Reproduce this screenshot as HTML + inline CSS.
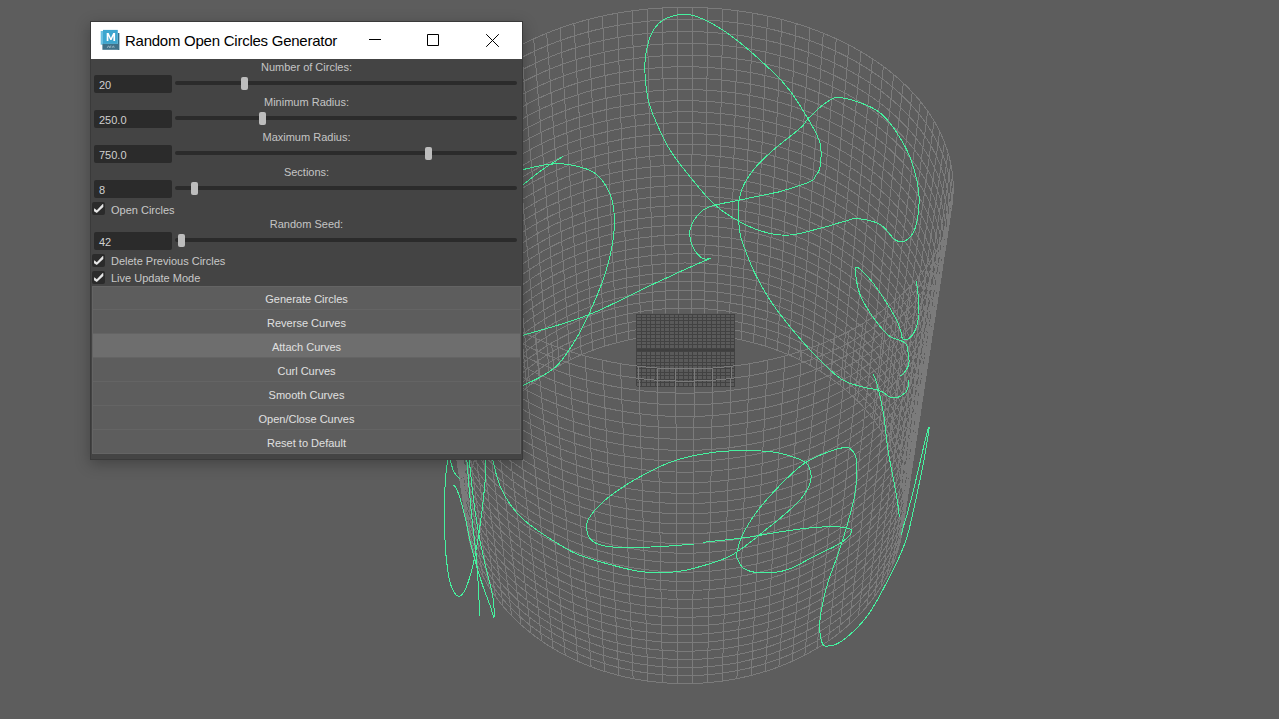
<!DOCTYPE html>
<html><head><meta charset="utf-8">
<style>
html,body{margin:0;padding:0;width:1279px;height:719px;overflow:hidden;background:#5d5d5d;font-family:"Liberation Sans",sans-serif;}
#vp{position:absolute;left:0;top:0;}
#dlg{position:absolute;left:90px;top:21px;width:431px;height:437px;border:1px solid #3a3a3a;background:#444444;box-shadow:0 4px 14px rgba(0,0,0,0.28);}
#title{position:absolute;left:0;top:0;width:431px;height:37px;background:#ffffff;}
#title .t{position:absolute;left:34px;top:10px;font-size:15px;letter-spacing:-0.25px;color:#000;white-space:nowrap;line-height:18px;}
.icon{position:absolute;left:9px;top:7px;width:20px;height:22px;}
.lbl{position:absolute;left:0;width:431px;text-align:center;font-size:11px;color:#c4c4c4;line-height:13px;white-space:nowrap;}
.inp{position:absolute;left:3px;width:78px;height:18px;background:#2b2b2b;border-radius:2px;}
.inp span{position:absolute;left:5px;top:4px;font-size:11px;color:#d0d0d0;line-height:13px;}
.trk{position:absolute;left:84px;width:342px;height:4px;background:#2b2b2b;border-radius:2px;}
.hdl{position:absolute;width:7px;height:13px;background:#bdbdbd;border-radius:2px;}
.cb{position:absolute;left:1px;width:13px;height:13px;background:#2b2b2b;border-radius:2px;}
.cbt{position:absolute;left:20px;font-size:11px;color:#c8c8c8;line-height:13px;white-space:nowrap;}
.btn{position:absolute;left:1px;width:429px;height:23px;background:#5d5d5d;text-align:center;font-size:11px;color:#e0e0e0;line-height:27px;border:1px solid #646464;border-top:none;box-sizing:border-box;height:24px;}
.btn.first{border-top:1px solid #646464;line-height:25px;}
</style></head><body>
<svg id="vp" width="1279" height="719" viewBox="0 0 1279 719">
<path d="M903.4,494.2 L902.7,488.2 L901.6,482.2 L900.3,476.2 L898.8,470.3 L897.0,464.5 L895.0,458.7 L892.7,453.1 L890.2,447.4 L887.5,441.9 L884.6,436.5 L881.4,431.2 L878.0,425.9 L874.4,420.8 L870.6,415.8 L866.6,410.9 L862.4,406.1 L858.0,401.5 L853.4,397.0 L848.7,392.6 L843.8,388.3 L838.7,384.2 L833.5,380.2 L828.1,376.4 L822.6,372.7 L817.0,369.2 L811.2,365.9 L805.3,362.7 L799.2,359.6 L793.1,356.7 L786.9,354.0 L780.5,351.5 L774.1,349.1 L767.5,346.9 L760.9,344.8 L754.3,343.0 L747.5,341.3 L740.7,339.7 L733.9,338.4 L727.0,337.2 L720.0,336.2 L713.1,335.4 L706.1,334.8 L699.1,334.4 L692.0,334.1 L685.0,334.0 L678.0,334.1 L670.9,334.4 L663.9,334.8 L656.9,335.4 L650.0,336.2 L643.0,337.2 L636.1,338.4 L629.3,339.7 L622.5,341.3 L615.7,343.0 L609.1,344.8 L602.5,346.9 L595.9,349.1 L589.5,351.5 L583.1,354.0 L576.9,356.7 L570.8,359.6 L564.7,362.7 L558.8,365.9 L553.0,369.2 L547.4,372.7 L541.9,376.4 L536.5,380.2 L531.3,384.2 L526.2,388.3 L521.3,392.6 L516.6,397.0 L512.0,401.5 L507.6,406.1 L503.4,410.9 L499.4,415.8 L495.6,420.8 L492.0,425.9 L488.6,431.2 L485.4,436.5 L482.5,441.9 L479.8,447.4 L477.3,453.1 L475.0,458.7 L473.0,464.5 L471.2,470.3 L469.7,476.2 L468.4,482.2 L467.3,488.2 L466.6,494.2 M904.7,485.9 L903.9,479.8 L902.9,473.8 L901.6,467.8 L900.0,461.9 L898.2,456.1 L896.2,450.3 L893.9,444.6 L891.4,439.0 L888.6,433.5 L885.7,428.1 L882.5,422.7 L879.1,417.5 L875.4,412.3 L871.6,407.3 L867.6,402.4 L863.4,397.7 L858.9,393.0 L854.4,388.5 L849.6,384.1 L844.7,379.8 L839.6,375.7 L834.3,371.7 L828.9,367.9 L823.4,364.2 L817.7,360.7 L811.9,357.4 L805.9,354.1 L799.8,351.1 L793.7,348.2 L787.4,345.5 L781.0,342.9 L774.5,340.6 L768.0,338.3 L761.3,336.3 L754.6,334.4 L747.9,332.7 L741.0,331.2 L734.1,329.9 L727.2,328.7 L720.2,327.7 L713.2,326.9 L706.2,326.3 L699.1,325.8 L692.1,325.5 L685.0,325.5 L677.9,325.5 L670.9,325.8 L663.8,326.3 L656.8,326.9 L649.8,327.7 L642.8,328.7 L635.9,329.9 L629.0,331.2 L622.1,332.7 L615.4,334.4 L608.7,336.3 L602.0,338.3 L595.5,340.6 L589.0,342.9 L582.6,345.5 L576.3,348.2 L570.2,351.1 L564.1,354.1 L558.1,357.4 L552.3,360.7 L546.6,364.2 L541.1,367.9 L535.7,371.7 L530.4,375.7 L525.3,379.8 L520.4,384.1 L515.6,388.5 L511.1,393.0 L506.6,397.7 L502.4,402.4 L498.4,407.3 L494.6,412.3 L490.9,417.5 L487.5,422.7 L484.3,428.1 L481.4,433.5 L478.6,439.0 L476.1,444.6 L473.8,450.3 L471.8,456.1 L470.0,461.9 L468.4,467.8 L467.1,473.8 L466.1,479.8 L465.3,485.9 M905.9,477.4 L905.1,471.4 L904.1,465.3 L902.8,459.4 L901.2,453.5 L899.4,447.6 L897.4,441.8 L895.1,436.1 L892.5,430.5 L889.8,425.0 L886.8,419.5 L883.6,414.2 L880.1,408.9 L876.5,403.8 L872.6,398.8 L868.6,393.9 L864.3,389.1 L859.9,384.4 L855.3,379.9 L850.5,375.5 L845.5,371.2 L840.4,367.1 L835.1,363.1 L829.7,359.3 L824.1,355.6 L818.4,352.1 L812.5,348.7 L806.6,345.5 L800.5,342.5 L794.3,339.6 L787.9,336.9 L781.5,334.3 L775.0,331.9 L768.4,329.7 L761.8,327.7 L755.0,325.8 L748.2,324.1 L741.3,322.6 L734.4,321.2 L727.4,320.1 L720.4,319.1 L713.4,318.3 L706.3,317.6 L699.2,317.2 L692.1,316.9 L685.0,316.8 L677.9,316.9 L670.8,317.2 L663.7,317.6 L656.6,318.3 L649.6,319.1 L642.6,320.1 L635.6,321.2 L628.7,322.6 L621.8,324.1 L615.0,325.8 L608.2,327.7 L601.6,329.7 L595.0,331.9 L588.5,334.3 L582.1,336.9 L575.7,339.6 L569.5,342.5 L563.4,345.5 L557.5,348.7 L551.6,352.1 L545.9,355.6 L540.3,359.3 L534.9,363.1 L529.6,367.1 L524.5,371.2 L519.5,375.5 L514.7,379.9 L510.1,384.4 L505.7,389.1 L501.4,393.9 L497.4,398.8 L493.5,403.8 L489.9,408.9 L486.4,414.2 L483.2,419.5 L480.2,425.0 L477.5,430.5 L474.9,436.1 L472.6,441.8 L470.6,447.6 L468.8,453.5 L467.2,459.4 L465.9,465.3 L464.9,471.4 L464.1,477.4 M907.2,468.9 L906.4,462.8 L905.4,456.8 L904.0,450.8 L902.5,444.9 L900.6,439.0 L898.6,433.2 L896.3,427.5 L893.7,421.9 L890.9,416.4 L887.9,410.9 L884.7,405.5 L881.2,400.3 L877.5,395.2 L873.7,390.1 L869.6,385.2 L865.3,380.4 L860.9,375.8 L856.2,371.2 L851.4,366.8 L846.4,362.6 L841.3,358.4 L835.9,354.5 L830.5,350.6 L824.9,346.9 L819.1,343.4 L813.2,340.0 L807.2,336.8 L801.1,333.8 L794.8,330.9 L788.5,328.2 L782.0,325.6 L775.5,323.2 L768.9,321.0 L762.2,318.9 L755.4,317.1 L748.5,315.4 L741.6,313.9 L734.7,312.5 L727.7,311.3 L720.6,310.3 L713.5,309.5 L706.4,308.9 L699.3,308.5 L692.1,308.2 L685.0,308.1 L677.9,308.2 L670.7,308.5 L663.6,308.9 L656.5,309.5 L649.4,310.3 L642.3,311.3 L635.3,312.5 L628.4,313.9 L621.5,315.4 L614.6,317.1 L607.8,318.9 L601.1,321.0 L594.5,323.2 L588.0,325.6 L581.5,328.2 L575.2,330.9 L568.9,333.8 L562.8,336.8 L556.8,340.0 L550.9,343.4 L545.1,346.9 L539.5,350.6 L534.1,354.5 L528.7,358.4 L523.6,362.6 L518.6,366.8 L513.8,371.2 L509.1,375.8 L504.7,380.4 L500.4,385.2 L496.3,390.1 L492.5,395.2 L488.8,400.3 L485.3,405.5 L482.1,410.9 L479.1,416.4 L476.3,421.9 L473.7,427.5 L471.4,433.2 L469.4,439.0 L467.5,444.9 L466.0,450.8 L464.6,456.8 L463.6,462.8 L462.8,468.9 M908.5,460.2 L907.7,454.2 L906.6,448.1 L905.3,442.1 L903.7,436.2 L901.9,430.3 L899.8,424.5 L897.5,418.8 L894.9,413.2 L892.1,407.6 L889.1,402.2 L885.8,396.8 L882.3,391.6 L878.6,386.4 L874.7,381.4 L870.6,376.5 L866.3,371.7 L861.8,367.0 L857.2,362.5 L852.3,358.0 L847.3,353.8 L842.1,349.7 L836.8,345.7 L831.3,341.8 L825.6,338.2 L819.8,334.6 L813.9,331.2 L807.9,328.0 L801.7,325.0 L795.4,322.1 L789.1,319.4 L782.6,316.8 L776.0,314.4 L769.3,312.2 L762.6,310.1 L755.8,308.3 L748.9,306.6 L741.9,305.0 L734.9,303.7 L727.9,302.5 L720.8,301.5 L713.7,300.7 L706.5,300.1 L699.4,299.6 L692.2,299.4 L685.0,299.3 L677.8,299.4 L670.6,299.6 L663.5,300.1 L656.3,300.7 L649.2,301.5 L642.1,302.5 L635.1,303.7 L628.1,305.0 L621.1,306.6 L614.2,308.3 L607.4,310.1 L600.7,312.2 L594.0,314.4 L587.4,316.8 L580.9,319.4 L574.6,322.1 L568.3,325.0 L562.1,328.0 L556.1,331.2 L550.2,334.6 L544.4,338.2 L538.7,341.8 L533.2,345.7 L527.9,349.7 L522.7,353.8 L517.7,358.0 L512.8,362.5 L508.2,367.0 L503.7,371.7 L499.4,376.5 L495.3,381.4 L491.4,386.4 L487.7,391.6 L484.2,396.8 L480.9,402.2 L477.9,407.6 L475.1,413.2 L472.5,418.8 L470.2,424.5 L468.1,430.3 L466.3,436.2 L464.7,442.1 L463.4,448.1 L462.3,454.2 L461.5,460.2 M909.8,451.5 L909.0,445.4 L907.9,439.4 L906.6,433.4 L905.0,427.4 L903.1,421.6 L901.0,415.8 L898.7,410.0 L896.1,404.4 L893.3,398.8 L890.2,393.4 L886.9,388.0 L883.4,382.7 L879.7,377.6 L875.8,372.5 L871.7,367.6 L867.3,362.8 L862.8,358.1 L858.1,353.6 L853.2,349.2 L848.2,344.9 L843.0,340.8 L837.6,336.8 L832.1,333.0 L826.4,329.3 L820.6,325.7 L814.6,322.4 L808.5,319.1 L802.3,316.1 L796.0,313.2 L789.6,310.5 L783.1,307.9 L776.5,305.5 L769.8,303.3 L763.0,301.2 L756.1,299.4 L749.2,297.6 L742.2,296.1 L735.2,294.8 L728.1,293.6 L721.0,292.6 L713.8,291.8 L706.6,291.2 L699.4,290.7 L692.2,290.4 L685.0,290.4 L677.8,290.4 L670.6,290.7 L663.4,291.2 L656.2,291.8 L649.0,292.6 L641.9,293.6 L634.8,294.8 L627.8,296.1 L620.8,297.6 L613.9,299.4 L607.0,301.2 L600.2,303.3 L593.5,305.5 L586.9,307.9 L580.4,310.5 L574.0,313.2 L567.7,316.1 L561.5,319.1 L555.4,322.4 L549.4,325.7 L543.6,329.3 L537.9,333.0 L532.4,336.8 L527.0,340.8 L521.8,344.9 L516.8,349.2 L511.9,353.6 L507.2,358.1 L502.7,362.8 L498.3,367.6 L494.2,372.5 L490.3,377.6 L486.6,382.7 L483.1,388.0 L479.8,393.4 L476.7,398.8 L473.9,404.4 L471.3,410.0 L469.0,415.8 L466.9,421.6 L465.0,427.4 L463.4,433.4 L462.1,439.4 L461.0,445.4 L460.2,451.5 M911.1,442.7 L910.3,436.6 L909.2,430.5 L907.9,424.5 L906.3,418.6 L904.4,412.7 L902.3,406.9 L899.9,401.1 L897.3,395.5 L894.5,389.9 L891.4,384.4 L888.1,379.1 L884.6,373.8 L880.8,368.6 L876.9,363.6 L872.7,358.7 L868.4,353.9 L863.8,349.2 L859.1,344.6 L854.2,340.2 L849.1,335.9 L843.9,331.8 L838.4,327.8 L832.9,324.0 L827.2,320.3 L821.3,316.7 L815.3,313.4 L809.2,310.1 L803.0,307.1 L796.6,304.2 L790.2,301.5 L783.6,298.9 L777.0,296.5 L770.2,294.3 L763.4,292.2 L756.5,290.3 L749.6,288.6 L742.5,287.1 L735.5,285.8 L728.3,284.6 L721.2,283.6 L714.0,282.8 L706.8,282.2 L699.5,281.7 L692.3,281.4 L685.0,281.3 L677.7,281.4 L670.5,281.7 L663.2,282.2 L656.0,282.8 L648.8,283.6 L641.7,284.6 L634.5,285.8 L627.5,287.1 L620.4,288.6 L613.5,290.3 L606.6,292.2 L599.8,294.3 L593.0,296.5 L586.4,298.9 L579.8,301.5 L573.4,304.2 L567.0,307.1 L560.8,310.1 L554.7,313.4 L548.7,316.7 L542.8,320.3 L537.1,324.0 L531.6,327.8 L526.1,331.8 L520.9,335.9 L515.8,340.2 L510.9,344.6 L506.2,349.2 L501.6,353.9 L497.3,358.7 L493.1,363.6 L489.2,368.6 L485.4,373.8 L481.9,379.1 L478.6,384.4 L475.5,389.9 L472.7,395.5 L470.1,401.1 L467.7,406.9 L465.6,412.7 L463.7,418.6 L462.1,424.5 L460.8,430.5 L459.7,436.6 L458.9,442.7 M912.4,433.7 L911.6,427.6 L910.5,421.5 L909.2,415.5 L907.5,409.6 L905.7,403.7 L903.5,397.9 L901.1,392.1 L898.5,386.5 L895.7,380.9 L892.6,375.4 L889.2,370.0 L885.7,364.8 L881.9,359.6 L878.0,354.5 L873.8,349.6 L869.4,344.8 L864.8,340.1 L860.1,335.6 L855.1,331.1 L850.0,326.9 L844.7,322.7 L839.3,318.7 L833.7,314.9 L828.0,311.2 L822.1,307.7 L816.1,304.3 L809.9,301.1 L803.6,298.0 L797.3,295.1 L790.8,292.4 L784.2,289.8 L777.5,287.4 L770.7,285.2 L763.9,283.1 L756.9,281.2 L749.9,279.5 L742.9,278.0 L735.7,276.7 L728.6,275.5 L721.4,274.5 L714.1,273.7 L706.9,273.1 L699.6,272.6 L692.3,272.3 L685.0,272.2 L677.7,272.3 L670.4,272.6 L663.1,273.1 L655.9,273.7 L648.6,274.5 L641.4,275.5 L634.3,276.7 L627.1,278.0 L620.1,279.5 L613.1,281.2 L606.1,283.1 L599.3,285.2 L592.5,287.4 L585.8,289.8 L579.2,292.4 L572.7,295.1 L566.4,298.0 L560.1,301.1 L553.9,304.3 L547.9,307.7 L542.0,311.2 L536.3,314.9 L530.7,318.7 L525.3,322.7 L520.0,326.9 L514.9,331.1 L509.9,335.6 L505.2,340.1 L500.6,344.8 L496.2,349.6 L492.0,354.5 L488.1,359.6 L484.3,364.8 L480.8,370.0 L477.4,375.4 L474.3,380.9 L471.5,386.5 L468.9,392.1 L466.5,397.9 L464.3,403.7 L462.5,409.6 L460.8,415.5 L459.5,421.5 L458.4,427.6 L457.6,433.7 M913.8,424.7 L913.0,418.5 L911.9,412.5 L910.5,406.4 L908.8,400.5 L907.0,394.6 L904.8,388.8 L902.4,383.0 L899.8,377.3 L896.9,371.8 L893.8,366.3 L890.4,360.9 L886.8,355.6 L883.1,350.5 L879.1,345.4 L874.8,340.5 L870.4,335.6 L865.8,331.0 L861.1,326.4 L856.1,322.0 L850.9,317.7 L845.6,313.5 L840.2,309.6 L834.5,305.7 L828.8,302.0 L822.8,298.5 L816.8,295.1 L810.6,291.9 L804.3,288.8 L797.9,285.9 L791.3,283.2 L784.7,280.6 L778.0,278.2 L771.2,276.0 L764.3,273.9 L757.3,272.0 L750.3,270.3 L743.2,268.8 L736.0,267.5 L728.8,266.3 L721.6,265.3 L714.3,264.5 L707.0,263.8 L699.7,263.4 L692.3,263.1 L685.0,263.0 L677.7,263.1 L670.3,263.4 L663.0,263.8 L655.7,264.5 L648.4,265.3 L641.2,266.3 L634.0,267.5 L626.8,268.8 L619.7,270.3 L612.7,272.0 L605.7,273.9 L598.8,276.0 L592.0,278.2 L585.3,280.6 L578.7,283.2 L572.1,285.9 L565.7,288.8 L559.4,291.9 L553.2,295.1 L547.2,298.5 L541.2,302.0 L535.5,305.7 L529.8,309.6 L524.4,313.5 L519.1,317.7 L513.9,322.0 L508.9,326.4 L504.2,331.0 L499.6,335.6 L495.2,340.5 L490.9,345.4 L486.9,350.5 L483.2,355.6 L479.6,360.9 L476.2,366.3 L473.1,371.8 L470.2,377.3 L467.6,383.0 L465.2,388.8 L463.0,394.6 L461.2,400.5 L459.5,406.4 L458.1,412.5 L457.0,418.5 L456.2,424.7 M915.2,415.5 L914.3,409.4 L913.2,403.3 L911.8,397.3 L910.2,391.3 L908.3,385.4 L906.1,379.6 L903.7,373.8 L901.0,368.1 L898.1,362.5 L895.0,357.1 L891.6,351.7 L888.0,346.4 L884.2,341.2 L880.2,336.1 L875.9,331.2 L871.5,326.4 L866.9,321.7 L862.1,317.1 L857.1,312.7 L851.9,308.4 L846.5,304.3 L841.0,300.3 L835.4,296.4 L829.6,292.7 L823.6,289.2 L817.5,285.8 L811.3,282.6 L805.0,279.5 L798.5,276.6 L791.9,273.9 L785.3,271.3 L778.5,268.9 L771.7,266.7 L764.7,264.6 L757.7,262.7 L750.6,261.0 L743.5,259.5 L736.3,258.1 L729.1,257.0 L721.8,256.0 L714.5,255.2 L707.1,254.5 L699.8,254.1 L692.4,253.8 L685.0,253.7 L677.6,253.8 L670.2,254.1 L662.9,254.5 L655.5,255.2 L648.2,256.0 L640.9,257.0 L633.7,258.1 L626.5,259.5 L619.4,261.0 L612.3,262.7 L605.3,264.6 L598.3,266.7 L591.5,268.9 L584.7,271.3 L578.1,273.9 L571.5,276.6 L565.0,279.5 L558.7,282.6 L552.5,285.8 L546.4,289.2 L540.4,292.7 L534.6,296.4 L529.0,300.3 L523.5,304.3 L518.1,308.4 L512.9,312.7 L507.9,317.1 L503.1,321.7 L498.5,326.4 L494.1,331.2 L489.8,336.1 L485.8,341.2 L482.0,346.4 L478.4,351.7 L475.0,357.1 L471.9,362.5 L469.0,368.1 L466.3,373.8 L463.9,379.6 L461.7,385.4 L459.8,391.3 L458.2,397.3 L456.8,403.3 L455.7,409.4 L454.8,415.5 M916.5,406.2 L915.7,400.1 L914.6,394.0 L913.2,388.0 L911.5,382.0 L909.6,376.1 L907.4,370.2 L905.0,364.5 L902.3,358.8 L899.4,353.2 L896.2,347.7 L892.8,342.3 L889.2,337.0 L885.3,331.8 L881.3,326.8 L877.0,321.8 L872.6,317.0 L867.9,312.3 L863.1,307.7 L858.0,303.3 L852.8,299.0 L847.5,294.9 L841.9,290.9 L836.2,287.0 L830.4,283.3 L824.4,279.8 L818.3,276.4 L812.0,273.2 L805.6,270.1 L799.1,267.2 L792.5,264.5 L785.8,261.9 L779.0,259.5 L772.1,257.3 L765.2,255.2 L758.1,253.3 L751.0,251.6 L743.8,250.1 L736.6,248.7 L729.3,247.6 L722.0,246.6 L714.6,245.8 L707.2,245.1 L699.8,244.7 L692.4,244.4 L685.0,244.3 L677.6,244.4 L670.2,244.7 L662.8,245.1 L655.4,245.8 L648.0,246.6 L640.7,247.6 L633.4,248.7 L626.2,250.1 L619.0,251.6 L611.9,253.3 L604.8,255.2 L597.9,257.3 L591.0,259.5 L584.2,261.9 L577.5,264.5 L570.9,267.2 L564.4,270.1 L558.0,273.2 L551.7,276.4 L545.6,279.8 L539.6,283.3 L533.8,287.0 L528.1,290.9 L522.5,294.9 L517.2,299.0 L512.0,303.3 L506.9,307.7 L502.1,312.3 L497.4,317.0 L493.0,321.8 L488.7,326.8 L484.7,331.8 L480.8,337.0 L477.2,342.3 L473.8,347.7 L470.6,353.2 L467.7,358.8 L465.0,364.5 L462.6,370.2 L460.4,376.1 L458.5,382.0 L456.8,388.0 L455.4,394.0 L454.3,400.1 L453.5,406.2 M917.9,396.8 L917.1,390.7 L915.9,384.6 L914.5,378.6 L912.9,372.6 L910.9,366.7 L908.7,360.8 L906.3,355.0 L903.6,349.4 L900.6,343.8 L897.4,338.3 L894.0,332.9 L890.4,327.6 L886.5,322.4 L882.4,317.3 L878.1,312.4 L873.7,307.5 L869.0,302.8 L864.1,298.3 L859.0,293.8 L853.8,289.5 L848.4,285.4 L842.8,281.4 L837.1,277.5 L831.2,273.8 L825.2,270.3 L819.0,266.9 L812.7,263.7 L806.3,260.6 L799.8,257.7 L793.1,254.9 L786.4,252.4 L779.6,250.0 L772.6,247.7 L765.6,245.7 L758.5,243.8 L751.4,242.1 L744.1,240.6 L736.9,239.2 L729.6,238.0 L722.2,237.1 L714.8,236.2 L707.4,235.6 L699.9,235.2 L692.5,234.9 L685.0,234.8 L677.5,234.9 L670.1,235.2 L662.6,235.6 L655.2,236.2 L647.8,237.1 L640.4,238.0 L633.1,239.2 L625.9,240.6 L618.6,242.1 L611.5,243.8 L604.4,245.7 L597.4,247.7 L590.4,250.0 L583.6,252.4 L576.9,254.9 L570.2,257.7 L563.7,260.6 L557.3,263.7 L551.0,266.9 L544.8,270.3 L538.8,273.8 L532.9,277.5 L527.2,281.4 L521.6,285.4 L516.2,289.5 L511.0,293.8 L505.9,298.3 L501.0,302.8 L496.3,307.5 L491.9,312.4 L487.6,317.3 L483.5,322.4 L479.6,327.6 L476.0,332.9 L472.6,338.3 L469.4,343.8 L466.4,349.4 L463.7,355.0 L461.3,360.8 L459.1,366.7 L457.1,372.6 L455.5,378.6 L454.1,384.6 L452.9,390.7 L452.1,396.8 M919.4,387.3 L918.5,381.2 L917.3,375.1 L915.9,369.0 L914.2,363.0 L912.3,357.1 L910.1,351.3 L907.6,345.5 L904.9,339.8 L901.9,334.2 L898.7,328.7 L895.2,323.3 L891.6,318.0 L887.7,312.8 L883.6,307.7 L879.3,302.8 L874.8,297.9 L870.0,293.2 L865.1,288.7 L860.0,284.2 L854.8,279.9 L849.3,275.8 L843.7,271.8 L838.0,267.9 L832.0,264.2 L826.0,260.7 L819.8,257.3 L813.5,254.0 L807.0,251.0 L800.4,248.1 L793.8,245.3 L787.0,242.8 L780.1,240.4 L773.1,238.1 L766.1,236.1 L758.9,234.2 L751.7,232.5 L744.5,231.0 L737.2,229.6 L729.8,228.4 L722.4,227.4 L715.0,226.6 L707.5,226.0 L700.0,225.5 L692.5,225.3 L685.0,225.2 L677.5,225.3 L670.0,225.5 L662.5,226.0 L655.0,226.6 L647.6,227.4 L640.2,228.4 L632.8,229.6 L625.5,231.0 L618.3,232.5 L611.1,234.2 L603.9,236.1 L596.9,238.1 L589.9,240.4 L583.0,242.8 L576.2,245.3 L569.6,248.1 L563.0,251.0 L556.5,254.0 L550.2,257.3 L544.0,260.7 L538.0,264.2 L532.0,267.9 L526.3,271.8 L520.7,275.8 L515.2,279.9 L510.0,284.2 L504.9,288.7 L500.0,293.2 L495.2,297.9 L490.7,302.8 L486.4,307.7 L482.3,312.8 L478.4,318.0 L474.8,323.3 L471.3,328.7 L468.1,334.2 L465.1,339.8 L462.4,345.5 L459.9,351.3 L457.7,357.1 L455.8,363.0 L454.1,369.0 L452.7,375.1 L451.5,381.2 L450.6,387.3 M920.8,377.7 L919.9,371.6 L918.8,365.5 L917.3,359.4 L915.6,353.4 L913.6,347.5 L911.4,341.6 L908.9,335.8 L906.2,330.1 L903.2,324.5 L900.0,319.0 L896.5,313.6 L892.8,308.3 L888.9,303.1 L884.8,298.0 L880.4,293.1 L875.9,288.2 L871.1,283.5 L866.2,279.0 L861.0,274.5 L855.7,270.2 L850.3,266.1 L844.6,262.1 L838.8,258.2 L832.9,254.5 L826.8,251.0 L820.6,247.6 L814.2,244.3 L807.7,241.3 L801.1,238.3 L794.4,235.6 L787.5,233.0 L780.6,230.6 L773.6,228.4 L766.5,226.3 L759.4,224.5 L752.1,222.8 L744.8,221.2 L737.5,219.9 L730.1,218.7 L722.6,217.7 L715.1,216.9 L707.6,216.3 L700.1,215.8 L692.5,215.5 L685.0,215.4 L677.5,215.5 L669.9,215.8 L662.4,216.3 L654.9,216.9 L647.4,217.7 L639.9,218.7 L632.5,219.9 L625.2,221.2 L617.9,222.8 L610.6,224.5 L603.5,226.3 L596.4,228.4 L589.4,230.6 L582.5,233.0 L575.6,235.6 L568.9,238.3 L562.3,241.3 L555.8,244.3 L549.4,247.6 L543.2,251.0 L537.1,254.5 L531.2,258.2 L525.4,262.1 L519.7,266.1 L514.3,270.2 L509.0,274.5 L503.8,279.0 L498.9,283.5 L494.1,288.2 L489.6,293.1 L485.2,298.0 L481.1,303.1 L477.2,308.3 L473.5,313.6 L470.0,319.0 L466.8,324.5 L463.8,330.1 L461.1,335.8 L458.6,341.6 L456.4,347.5 L454.4,353.4 L452.7,359.4 L451.2,365.5 L450.1,371.6 L449.2,377.7 M922.3,368.0 L921.4,361.8 L920.2,355.7 L918.7,349.6 L917.0,343.6 L915.0,337.7 L912.8,331.8 L910.3,326.1 L907.5,320.4 L904.5,314.7 L901.2,309.2 L897.8,303.8 L894.0,298.5 L890.1,293.3 L885.9,288.2 L881.6,283.3 L877.0,278.4 L872.2,273.7 L867.2,269.1 L862.1,264.7 L856.7,260.4 L851.2,256.3 L845.6,252.2 L839.7,248.4 L833.7,244.7 L827.6,241.1 L821.3,237.7 L814.9,234.5 L808.4,231.4 L801.8,228.5 L795.0,225.8 L788.1,223.2 L781.2,220.8 L774.1,218.6 L767.0,216.5 L759.8,214.6 L752.5,212.9 L745.2,211.4 L737.8,210.0 L730.3,208.9 L722.8,207.9 L715.3,207.0 L707.7,206.4 L700.2,206.0 L692.6,205.7 L685.0,205.6 L677.4,205.7 L669.8,206.0 L662.3,206.4 L654.7,207.0 L647.2,207.9 L639.7,208.9 L632.2,210.0 L624.8,211.4 L617.5,212.9 L610.2,214.6 L603.0,216.5 L595.9,218.6 L588.8,220.8 L581.9,223.2 L575.0,225.8 L568.2,228.5 L561.6,231.4 L555.1,234.5 L548.7,237.7 L542.4,241.1 L536.3,244.7 L530.3,248.4 L524.4,252.2 L518.8,256.3 L513.3,260.4 L507.9,264.7 L502.8,269.1 L497.8,273.7 L493.0,278.4 L488.4,283.3 L484.1,288.2 L479.9,293.3 L476.0,298.5 L472.2,303.8 L468.8,309.2 L465.5,314.7 L462.5,320.4 L459.7,326.1 L457.2,331.8 L455.0,337.7 L453.0,343.6 L451.3,349.6 L449.8,355.7 L448.6,361.8 L447.7,368.0 M923.7,358.1 L922.8,352.0 L921.6,345.8 L920.2,339.8 L918.4,333.8 L916.4,327.8 L914.2,321.9 L911.6,316.2 L908.8,310.5 L905.8,304.8 L902.5,299.3 L899.0,293.9 L895.3,288.6 L891.3,283.4 L887.1,278.3 L882.7,273.3 L878.1,268.5 L873.3,263.8 L868.3,259.2 L863.1,254.8 L857.7,250.5 L852.2,246.3 L846.5,242.3 L840.6,238.4 L834.6,234.7 L828.4,231.2 L822.1,227.8 L815.7,224.5 L809.1,221.5 L802.4,218.6 L795.6,215.8 L788.7,213.2 L781.7,210.8 L774.6,208.6 L767.5,206.6 L760.2,204.7 L752.9,203.0 L745.5,201.4 L738.1,200.1 L730.6,198.9 L723.0,197.9 L715.5,197.1 L707.9,196.5 L700.3,196.0 L692.6,195.7 L685.0,195.6 L677.4,195.7 L669.7,196.0 L662.1,196.5 L654.5,197.1 L647.0,197.9 L639.4,198.9 L631.9,200.1 L624.5,201.4 L617.1,203.0 L609.8,204.7 L602.5,206.6 L595.4,208.6 L588.3,210.8 L581.3,213.2 L574.4,215.8 L567.6,218.6 L560.9,221.5 L554.3,224.5 L547.9,227.8 L541.6,231.2 L535.4,234.7 L529.4,238.4 L523.5,242.3 L517.8,246.3 L512.3,250.5 L506.9,254.8 L501.7,259.2 L496.7,263.8 L491.9,268.5 L487.3,273.3 L482.9,278.3 L478.7,283.4 L474.7,288.6 L471.0,293.9 L467.5,299.3 L464.2,304.8 L461.2,310.5 L458.4,316.2 L455.8,321.9 L453.6,327.8 L451.6,333.8 L449.8,339.8 L448.4,345.8 L447.2,352.0 L446.3,358.1 M925.2,348.1 L924.3,342.0 L923.1,335.8 L921.6,329.8 L919.9,323.8 L917.9,317.8 L915.6,311.9 L913.0,306.1 L910.2,300.4 L907.2,294.8 L903.9,289.3 L900.3,283.9 L896.5,278.6 L892.6,273.3 L888.3,268.3 L883.9,263.3 L879.3,258.5 L874.4,253.7 L869.4,249.2 L864.2,244.7 L858.8,240.4 L853.2,236.3 L847.4,232.2 L841.5,228.4 L835.5,224.7 L829.3,221.1 L822.9,217.7 L816.4,214.5 L809.8,211.4 L803.1,208.5 L796.3,205.8 L789.3,203.2 L782.3,200.8 L775.1,198.5 L767.9,196.5 L760.6,194.6 L753.3,192.9 L745.8,191.4 L738.4,190.0 L730.8,188.8 L723.3,187.8 L715.6,187.0 L708.0,186.4 L700.4,185.9 L692.7,185.7 L685.0,185.6 L677.3,185.7 L669.6,185.9 L662.0,186.4 L654.4,187.0 L646.7,187.8 L639.2,188.8 L631.6,190.0 L624.2,191.4 L616.7,192.9 L609.4,194.6 L602.1,196.5 L594.9,198.5 L587.7,200.8 L580.7,203.2 L573.7,205.8 L566.9,208.5 L560.2,211.4 L553.6,214.5 L547.1,217.7 L540.7,221.1 L534.5,224.7 L528.5,228.4 L522.6,232.2 L516.8,236.3 L511.2,240.4 L505.8,244.7 L500.6,249.2 L495.6,253.7 L490.7,258.5 L486.1,263.3 L481.7,268.3 L477.4,273.3 L473.5,278.6 L469.7,283.9 L466.1,289.3 L462.8,294.8 L459.8,300.4 L457.0,306.1 L454.4,311.9 L452.1,317.8 L450.1,323.8 L448.4,329.8 L446.9,335.8 L445.7,342.0 L444.8,348.1 M926.7,338.0 L925.8,331.9 L924.6,325.7 L923.1,319.7 L921.3,313.6 L919.3,307.7 L917.0,301.8 L914.4,296.0 L911.6,290.3 L908.5,284.7 L905.2,279.1 L901.6,273.7 L897.8,268.4 L893.8,263.2 L889.6,258.1 L885.1,253.1 L880.4,248.3 L875.6,243.6 L870.5,239.0 L865.2,234.5 L859.8,230.2 L854.2,226.1 L848.4,222.1 L842.5,218.2 L836.4,214.5 L830.1,210.9 L823.7,207.5 L817.2,204.3 L810.6,201.2 L803.8,198.3 L796.9,195.6 L789.9,193.0 L782.8,190.6 L775.7,188.4 L768.4,186.3 L761.1,184.4 L753.7,182.7 L746.2,181.2 L738.7,179.8 L731.1,178.7 L723.5,177.7 L715.8,176.8 L708.1,176.2 L700.4,175.8 L692.7,175.5 L685.0,175.4 L677.3,175.5 L669.6,175.8 L661.9,176.2 L654.2,176.8 L646.5,177.7 L638.9,178.7 L631.3,179.8 L623.8,181.2 L616.3,182.7 L608.9,184.4 L601.6,186.3 L594.3,188.4 L587.2,190.6 L580.1,193.0 L573.1,195.6 L566.2,198.3 L559.4,201.2 L552.8,204.3 L546.3,207.5 L539.9,210.9 L533.6,214.5 L527.5,218.2 L521.6,222.1 L515.8,226.1 L510.2,230.2 L504.8,234.5 L499.5,239.0 L494.4,243.6 L489.6,248.3 L484.9,253.1 L480.4,258.1 L476.2,263.2 L472.2,268.4 L468.4,273.7 L464.8,279.1 L461.5,284.7 L458.4,290.3 L455.6,296.0 L453.0,301.8 L450.7,307.7 L448.7,313.6 L446.9,319.7 L445.4,325.7 L444.2,331.9 L443.3,338.0 M928.2,327.8 L927.3,321.6 L926.1,315.5 L924.6,309.4 L922.8,303.4 L920.7,297.4 L918.4,291.5 L915.8,285.7 L913.0,280.0 L909.9,274.4 L906.5,268.9 L902.9,263.4 L899.1,258.1 L895.1,252.9 L890.8,247.8 L886.3,242.8 L881.6,238.0 L876.7,233.3 L871.6,228.7 L866.3,224.2 L860.8,219.9 L855.2,215.8 L849.4,211.8 L843.4,207.9 L837.2,204.2 L831.0,200.6 L824.5,197.2 L818.0,194.0 L811.3,190.9 L804.5,188.0 L797.6,185.3 L790.5,182.7 L783.4,180.3 L776.2,178.1 L768.9,176.0 L761.5,174.1 L754.1,172.4 L746.5,170.9 L739.0,169.5 L731.4,168.4 L723.7,167.4 L716.0,166.5 L708.3,165.9 L700.5,165.5 L692.8,165.2 L685.0,165.1 L677.2,165.2 L669.5,165.5 L661.7,165.9 L654.0,166.5 L646.3,167.4 L638.6,168.4 L631.0,169.5 L623.5,170.9 L615.9,172.4 L608.5,174.1 L601.1,176.0 L593.8,178.1 L586.6,180.3 L579.5,182.7 L572.4,185.3 L565.5,188.0 L558.7,190.9 L552.0,194.0 L545.5,197.2 L539.0,200.6 L532.8,204.2 L526.6,207.9 L520.6,211.8 L514.8,215.8 L509.2,219.9 L503.7,224.2 L498.4,228.7 L493.3,233.3 L488.4,238.0 L483.7,242.8 L479.2,247.8 L474.9,252.9 L470.9,258.1 L467.1,263.4 L463.5,268.9 L460.1,274.4 L457.0,280.0 L454.2,285.7 L451.6,291.5 L449.3,297.4 L447.2,303.4 L445.4,309.4 L443.9,315.5 L442.7,321.6 L441.8,327.8 M929.8,317.5 L928.8,311.3 L927.6,305.1 L926.1,299.0 L924.3,293.0 L922.2,287.0 L919.9,281.2 L917.3,275.3 L914.4,269.6 L911.3,264.0 L907.9,258.5 L904.3,253.0 L900.4,247.7 L896.4,242.5 L892.0,237.4 L887.5,232.4 L882.8,227.6 L877.9,222.9 L872.7,218.3 L867.4,213.8 L861.9,209.5 L856.2,205.4 L850.3,201.3 L844.3,197.5 L838.2,193.8 L831.8,190.2 L825.4,186.8 L818.8,183.6 L812.0,180.5 L805.2,177.6 L798.2,174.8 L791.2,172.3 L784.0,169.9 L776.7,167.6 L769.4,165.6 L762.0,163.7 L754.5,162.0 L746.9,160.5 L739.3,159.1 L731.6,157.9 L723.9,156.9 L716.2,156.1 L708.4,155.5 L700.6,155.0 L692.8,154.8 L685.0,154.7 L677.2,154.8 L669.4,155.0 L661.6,155.5 L653.8,156.1 L646.1,156.9 L638.4,157.9 L630.7,159.1 L623.1,160.5 L615.5,162.0 L608.0,163.7 L600.6,165.6 L593.3,167.6 L586.0,169.9 L578.8,172.3 L571.8,174.8 L564.8,177.6 L558.0,180.5 L551.2,183.6 L544.6,186.8 L538.2,190.2 L531.8,193.8 L525.7,197.5 L519.7,201.3 L513.8,205.4 L508.1,209.5 L502.6,213.8 L497.3,218.3 L492.1,222.9 L487.2,227.6 L482.5,232.4 L478.0,237.4 L473.6,242.5 L469.6,247.7 L465.7,253.0 L462.1,258.5 L458.7,264.0 L455.6,269.6 L452.7,275.3 L450.1,281.2 L447.8,287.0 L445.7,293.0 L443.9,299.0 L442.4,305.1 L441.2,311.3 L440.2,317.5 M931.4,307.0 L930.4,300.8 L929.2,294.6 L927.6,288.5 L925.8,282.5 L923.7,276.5 L921.3,270.6 L918.7,264.8 L915.8,259.1 L912.7,253.5 L909.3,247.9 L905.6,242.5 L901.8,237.2 L897.6,232.0 L893.3,226.9 L888.8,221.9 L884.0,217.0 L879.0,212.3 L873.9,207.7 L868.5,203.3 L863.0,199.0 L857.2,194.8 L851.3,190.8 L845.3,186.9 L839.1,183.2 L832.7,179.7 L826.2,176.3 L819.6,173.0 L812.8,170.0 L805.9,167.0 L798.9,164.3 L791.8,161.7 L784.6,159.3 L777.3,157.1 L769.9,155.0 L762.4,153.2 L754.9,151.4 L747.3,149.9 L739.6,148.6 L731.9,147.4 L724.2,146.4 L716.4,145.6 L708.5,144.9 L700.7,144.5 L692.9,144.2 L685.0,144.1 L677.1,144.2 L669.3,144.5 L661.5,144.9 L653.6,145.6 L645.8,146.4 L638.1,147.4 L630.4,148.6 L622.7,149.9 L615.1,151.4 L607.6,153.2 L600.1,155.0 L592.7,157.1 L585.4,159.3 L578.2,161.7 L571.1,164.3 L564.1,167.0 L557.2,170.0 L550.4,173.0 L543.8,176.3 L537.3,179.7 L530.9,183.2 L524.7,186.9 L518.7,190.8 L512.8,194.8 L507.0,199.0 L501.5,203.3 L496.1,207.7 L491.0,212.3 L486.0,217.0 L481.2,221.9 L476.7,226.9 L472.4,232.0 L468.2,237.2 L464.4,242.5 L460.7,247.9 L457.3,253.5 L454.2,259.1 L451.3,264.8 L448.7,270.6 L446.3,276.5 L444.2,282.5 L442.4,288.5 L440.8,294.6 L439.6,300.8 L438.6,307.0 M932.9,296.3 L932.0,290.1 L930.7,284.0 L929.2,277.9 L927.3,271.8 L925.2,265.9 L922.8,260.0 L920.2,254.2 L917.3,248.4 L914.1,242.8 L910.7,237.3 L907.0,231.8 L903.1,226.5 L899.0,221.3 L894.6,216.2 L890.0,211.2 L885.2,206.4 L880.2,201.6 L875.0,197.1 L869.6,192.6 L864.0,188.3 L858.3,184.1 L852.3,180.1 L846.2,176.3 L840.0,172.5 L833.6,169.0 L827.0,165.6 L820.4,162.4 L813.6,159.3 L806.6,156.4 L799.6,153.6 L792.4,151.1 L785.2,148.7 L777.8,146.4 L770.4,144.4 L762.9,142.5 L755.3,140.8 L747.6,139.2 L739.9,137.9 L732.2,136.7 L724.4,135.7 L716.5,134.9 L708.7,134.3 L700.8,133.8 L692.9,133.6 L685.0,133.5 L677.1,133.6 L669.2,133.8 L661.3,134.3 L653.5,134.9 L645.6,135.7 L637.8,136.7 L630.1,137.9 L622.4,139.2 L614.7,140.8 L607.1,142.5 L599.6,144.4 L592.2,146.4 L584.8,148.7 L577.6,151.1 L570.4,153.6 L563.4,156.4 L556.4,159.3 L549.6,162.4 L543.0,165.6 L536.4,169.0 L530.0,172.5 L523.8,176.3 L517.7,180.1 L511.7,184.1 L506.0,188.3 L500.4,192.6 L495.0,197.1 L489.8,201.6 L484.8,206.4 L480.0,211.2 L475.4,216.2 L471.0,221.3 L466.9,226.5 L463.0,231.8 L459.3,237.3 L455.9,242.8 L452.7,248.4 L449.8,254.2 L447.2,260.0 L444.8,265.9 L442.7,271.8 L440.8,277.9 L439.3,284.0 L438.0,290.1 L437.1,296.3 M934.5,285.6 L933.6,279.4 L932.3,273.2 L930.7,267.1 L928.9,261.1 L926.8,255.1 L924.3,249.2 L921.7,243.4 L918.7,237.6 L915.5,232.0 L912.1,226.5 L908.4,221.0 L904.5,215.7 L900.3,210.5 L895.9,205.4 L891.3,200.4 L886.4,195.6 L881.4,190.8 L876.2,186.3 L870.7,181.8 L865.1,177.5 L859.3,173.3 L853.4,169.3 L847.2,165.5 L840.9,161.7 L834.5,158.2 L827.9,154.8 L821.2,151.6 L814.3,148.5 L807.3,145.6 L800.3,142.8 L793.1,140.3 L785.8,137.9 L778.4,135.6 L770.9,133.6 L763.3,131.7 L755.7,130.0 L748.0,128.5 L740.3,127.1 L732.5,125.9 L724.6,124.9 L716.7,124.1 L708.8,123.5 L700.9,123.0 L693.0,122.8 L685.0,122.7 L677.0,122.8 L669.1,123.0 L661.2,123.5 L653.3,124.1 L645.4,124.9 L637.5,125.9 L629.7,127.1 L622.0,128.5 L614.3,130.0 L606.7,131.7 L599.1,133.6 L591.6,135.6 L584.2,137.9 L576.9,140.3 L569.7,142.8 L562.7,145.6 L555.7,148.5 L548.8,151.6 L542.1,154.8 L535.5,158.2 L529.1,161.7 L522.8,165.5 L516.6,169.3 L510.7,173.3 L504.9,177.5 L499.3,181.8 L493.8,186.3 L488.6,190.8 L483.6,195.6 L478.7,200.4 L474.1,205.4 L469.7,210.5 L465.5,215.7 L461.6,221.0 L457.9,226.5 L454.5,232.0 L451.3,237.6 L448.3,243.4 L445.7,249.2 L443.2,255.1 L441.1,261.1 L439.3,267.1 L437.7,273.2 L436.4,279.4 L435.5,285.6 M936.2,274.7 L935.2,268.5 L933.9,262.3 L932.3,256.2 L930.5,250.1 L928.3,244.2 L925.9,238.3 L923.2,232.5 L920.2,226.7 L917.0,221.1 L913.5,215.5 L909.8,210.1 L905.8,204.8 L901.6,199.6 L897.2,194.5 L892.6,189.5 L887.7,184.6 L882.6,179.9 L877.4,175.3 L871.9,170.9 L866.2,166.6 L860.4,162.4 L854.4,158.4 L848.2,154.5 L841.9,150.8 L835.4,147.3 L828.8,143.9 L822.0,140.6 L815.1,137.6 L808.1,134.6 L801.0,131.9 L793.7,129.3 L786.4,126.9 L778.9,124.7 L771.4,122.6 L763.8,120.8 L756.1,119.1 L748.4,117.5 L740.6,116.2 L732.7,115.0 L724.8,114.0 L716.9,113.2 L709.0,112.6 L701.0,112.1 L693.0,111.8 L685.0,111.8 L677.0,111.8 L669.0,112.1 L661.0,112.6 L653.1,113.2 L645.2,114.0 L637.3,115.0 L629.4,116.2 L621.6,117.5 L613.9,119.1 L606.2,120.8 L598.6,122.6 L591.1,124.7 L583.6,126.9 L576.3,129.3 L569.0,131.9 L561.9,134.6 L554.9,137.6 L548.0,140.6 L541.2,143.9 L534.6,147.3 L528.1,150.8 L521.8,154.5 L515.6,158.4 L509.6,162.4 L503.8,166.6 L498.1,170.9 L492.6,175.3 L487.4,179.9 L482.3,184.6 L477.4,189.5 L472.8,194.5 L468.4,199.6 L464.2,204.8 L460.2,210.1 L456.5,215.5 L453.0,221.1 L449.8,226.7 L446.8,232.5 L444.1,238.3 L441.7,244.2 L439.5,250.1 L437.7,256.2 L436.1,262.3 L434.8,268.5 L433.8,274.7 M937.8,263.6 L936.8,257.4 L935.5,251.2 L933.9,245.1 L932.0,239.1 L929.9,233.1 L927.4,227.2 L924.7,221.4 L921.7,215.7 L918.5,210.0 L915.0,204.5 L911.2,199.0 L907.2,193.7 L903.0,188.5 L898.5,183.4 L893.9,178.4 L889.0,173.6 L883.9,168.8 L878.5,164.3 L873.0,159.8 L867.4,155.5 L861.5,151.3 L855.4,147.3 L849.2,143.5 L842.8,139.7 L836.3,136.2 L829.6,132.8 L822.8,129.6 L815.9,126.5 L808.8,123.6 L801.7,120.8 L794.4,118.3 L787.0,115.9 L779.5,113.6 L771.9,111.6 L764.3,109.7 L756.6,108.0 L748.8,106.5 L740.9,105.1 L733.0,104.0 L725.1,103.0 L717.1,102.2 L709.1,101.5 L701.1,101.1 L693.0,100.8 L685.0,100.7 L677.0,100.8 L668.9,101.1 L660.9,101.5 L652.9,102.2 L644.9,103.0 L637.0,104.0 L629.1,105.1 L621.2,106.5 L613.4,108.0 L605.7,109.7 L598.1,111.6 L590.5,113.6 L583.0,115.9 L575.6,118.3 L568.3,120.8 L561.2,123.6 L554.1,126.5 L547.2,129.6 L540.4,132.8 L533.7,136.2 L527.2,139.7 L520.8,143.5 L514.6,147.3 L508.5,151.3 L502.6,155.5 L497.0,159.8 L491.5,164.3 L486.1,168.8 L481.0,173.6 L476.1,178.4 L471.5,183.4 L467.0,188.5 L462.8,193.7 L458.8,199.0 L455.0,204.5 L451.5,210.0 L448.3,215.7 L445.3,221.4 L442.6,227.2 L440.1,233.1 L438.0,239.1 L436.1,245.1 L434.5,251.2 L433.2,257.4 L432.2,263.6 M939.5,252.4 L938.5,246.2 L937.2,240.0 L935.6,233.9 L933.6,227.9 L931.5,221.9 L929.0,216.0 L926.3,210.2 L923.2,204.4 L920.0,198.8 L916.4,193.3 L912.7,187.8 L908.6,182.5 L904.4,177.3 L899.9,172.2 L895.2,167.2 L890.2,162.3 L885.1,157.6 L879.8,153.0 L874.2,148.6 L868.5,144.3 L862.6,140.1 L856.5,136.1 L850.2,132.3 L843.8,128.5 L837.2,125.0 L830.5,121.6 L823.7,118.4 L816.7,115.3 L809.6,112.4 L802.4,109.7 L795.0,107.1 L787.6,104.7 L780.1,102.5 L772.5,100.4 L764.8,98.5 L757.0,96.8 L749.2,95.3 L741.3,93.9 L733.3,92.8 L725.3,91.8 L717.3,91.0 L709.3,90.3 L701.2,89.9 L693.1,89.6 L685.0,89.5 L676.9,89.6 L668.8,89.9 L660.7,90.3 L652.7,91.0 L644.7,91.8 L636.7,92.8 L628.7,93.9 L620.8,95.3 L613.0,96.8 L605.2,98.5 L597.5,100.4 L589.9,102.5 L582.4,104.7 L575.0,107.1 L567.6,109.7 L560.4,112.4 L553.3,115.3 L546.3,118.4 L539.5,121.6 L532.8,125.0 L526.2,128.5 L519.8,132.3 L513.5,136.1 L507.4,140.1 L501.5,144.3 L495.8,148.6 L490.2,153.0 L484.9,157.6 L479.8,162.3 L474.8,167.2 L470.1,172.2 L465.6,177.3 L461.4,182.5 L457.3,187.8 L453.6,193.3 L450.0,198.8 L446.8,204.4 L443.7,210.2 L441.0,216.0 L438.5,221.9 L436.4,227.9 L434.4,233.9 L432.8,240.0 L431.5,246.2 L430.5,252.4 M941.2,241.1 L940.2,234.9 L938.8,228.7 L937.2,222.6 L935.3,216.5 L933.1,210.5 L930.6,204.6 L927.8,198.8 L924.8,193.1 L921.5,187.4 L917.9,181.9 L914.1,176.5 L910.1,171.1 L905.8,165.9 L901.3,160.8 L896.5,155.8 L891.5,151.0 L886.4,146.3 L881.0,141.7 L875.4,137.2 L869.6,132.9 L863.7,128.8 L857.6,124.8 L851.3,120.9 L844.8,117.2 L838.2,113.6 L831.4,110.3 L824.5,107.0 L817.5,104.0 L810.4,101.1 L803.1,98.3 L795.7,95.8 L788.2,93.4 L780.6,91.1 L773.0,89.1 L765.2,87.2 L757.4,85.5 L749.5,84.0 L741.6,82.6 L733.6,81.5 L725.6,80.5 L717.5,79.6 L709.4,79.0 L701.3,78.6 L693.1,78.3 L685.0,78.2 L676.9,78.3 L668.7,78.6 L660.6,79.0 L652.5,79.6 L644.4,80.5 L636.4,81.5 L628.4,82.6 L620.5,84.0 L612.6,85.5 L604.8,87.2 L597.0,89.1 L589.4,91.1 L581.8,93.4 L574.3,95.8 L566.9,98.3 L559.6,101.1 L552.5,104.0 L545.5,107.0 L538.6,110.3 L531.8,113.6 L525.2,117.2 L518.7,120.9 L512.4,124.8 L506.3,128.8 L500.4,132.9 L494.6,137.2 L489.0,141.7 L483.6,146.3 L478.5,151.0 L473.5,155.8 L468.7,160.8 L464.2,165.9 L459.9,171.1 L455.9,176.5 L452.1,181.9 L448.5,187.4 L445.2,193.1 L442.2,198.8 L439.4,204.6 L436.9,210.5 L434.7,216.5 L432.8,222.6 L431.2,228.7 L429.8,234.9 L428.8,241.1 M942.9,229.6 L941.9,223.4 L940.5,217.2 L938.9,211.1 L936.9,205.0 L934.7,199.0 L932.2,193.1 L929.4,187.3 L926.4,181.6 L923.0,175.9 L919.4,170.4 L915.6,165.0 L911.5,159.6 L907.2,154.4 L902.6,149.3 L897.9,144.3 L892.9,139.5 L887.6,134.8 L882.2,130.2 L876.6,125.7 L870.8,121.4 L864.8,117.3 L858.6,113.3 L852.3,109.4 L845.8,105.7 L839.1,102.2 L832.3,98.8 L825.4,95.5 L818.3,92.5 L811.1,89.6 L803.8,86.8 L796.4,84.3 L788.9,81.9 L781.2,79.7 L773.5,77.6 L765.7,75.7 L757.9,74.0 L749.9,72.5 L741.9,71.2 L733.9,70.0 L725.8,69.0 L717.7,68.2 L709.6,67.6 L701.4,67.1 L693.2,66.8 L685.0,66.7 L676.8,66.8 L668.6,67.1 L660.4,67.6 L652.3,68.2 L644.2,69.0 L636.1,70.0 L628.1,71.2 L620.1,72.5 L612.1,74.0 L604.3,75.7 L596.5,77.6 L588.8,79.7 L581.1,81.9 L573.6,84.3 L566.2,86.8 L558.9,89.6 L551.7,92.5 L544.6,95.5 L537.7,98.8 L530.9,102.2 L524.2,105.7 L517.7,109.4 L511.4,113.3 L505.2,117.3 L499.2,121.4 L493.4,125.7 L487.8,130.2 L482.4,134.8 L477.1,139.5 L472.1,144.3 L467.4,149.3 L462.8,154.4 L458.5,159.6 L454.4,165.0 L450.6,170.4 L447.0,175.9 L443.6,181.6 L440.6,187.3 L437.8,193.1 L435.3,199.0 L433.1,205.0 L431.1,211.1 L429.5,217.2 L428.1,223.4 L427.1,229.6 M944.6,217.9 L943.6,211.7 L942.2,205.5 L940.6,199.4 L938.6,193.4 L936.4,187.4 L933.8,181.5 L931.0,175.7 L927.9,169.9 L924.6,164.3 L921.0,158.7 L917.1,153.3 L913.0,148.0 L908.6,142.8 L904.0,137.7 L899.2,132.7 L894.2,127.8 L888.9,123.1 L883.5,118.6 L877.8,114.1 L872.0,109.8 L865.9,105.7 L859.7,101.6 L853.3,97.8 L846.8,94.1 L840.1,90.5 L833.3,87.2 L826.3,83.9 L819.2,80.9 L811.9,78.0 L804.5,75.2 L797.1,72.7 L789.5,70.3 L781.8,68.1 L774.1,66.0 L766.2,64.1 L758.3,62.4 L750.3,60.9 L742.3,59.6 L734.2,58.4 L726.1,57.4 L717.9,56.6 L709.7,56.0 L701.5,55.5 L693.2,55.2 L685.0,55.1 L676.8,55.2 L668.5,55.5 L660.3,56.0 L652.1,56.6 L643.9,57.4 L635.8,58.4 L627.7,59.6 L619.7,60.9 L611.7,62.4 L603.8,64.1 L595.9,66.0 L588.2,68.1 L580.5,70.3 L572.9,72.7 L565.5,75.2 L558.1,78.0 L550.8,80.9 L543.7,83.9 L536.7,87.2 L529.9,90.5 L523.2,94.1 L516.7,97.8 L510.3,101.6 L504.1,105.7 L498.0,109.8 L492.2,114.1 L486.5,118.6 L481.1,123.1 L475.8,127.8 L470.8,132.7 L466.0,137.7 L461.4,142.8 L457.0,148.0 L452.9,153.3 L449.0,158.7 L445.4,164.3 L442.1,169.9 L439.0,175.7 L436.2,181.5 L433.6,187.4 L431.4,193.4 L429.4,199.4 L427.8,205.5 L426.4,211.7 L425.4,217.9 M946.4,206.1 L945.3,199.9 L944.0,193.7 L942.3,187.6 L940.3,181.6 L938.0,175.6 L935.5,169.7 L932.6,163.8 L929.5,158.1 L926.2,152.5 L922.5,146.9 L918.6,141.5 L914.5,136.2 L910.1,131.0 L905.5,125.9 L900.6,120.9 L895.5,116.1 L890.2,111.3 L884.7,106.8 L879.1,102.3 L873.2,98.0 L867.1,93.9 L860.8,89.9 L854.4,86.0 L847.8,82.3 L841.1,78.8 L834.2,75.4 L827.2,72.2 L820.0,69.1 L812.7,66.2 L805.3,63.5 L797.8,60.9 L790.2,58.5 L782.4,56.3 L774.6,54.3 L766.7,52.4 L758.8,50.7 L750.7,49.2 L742.7,47.8 L734.5,46.6 L726.3,45.7 L718.1,44.8 L709.9,44.2 L701.6,43.8 L693.3,43.5 L685.0,43.4 L676.7,43.5 L668.4,43.8 L660.1,44.2 L651.9,44.8 L643.7,45.7 L635.5,46.6 L627.3,47.8 L619.3,49.2 L611.2,50.7 L603.3,52.4 L595.4,54.3 L587.6,56.3 L579.8,58.5 L572.2,60.9 L564.7,63.5 L557.3,66.2 L550.0,69.1 L542.8,72.2 L535.8,75.4 L528.9,78.8 L522.2,82.3 L515.6,86.0 L509.2,89.9 L502.9,93.9 L496.8,98.0 L490.9,102.3 L485.3,106.8 L479.8,111.3 L474.5,116.1 L469.4,120.9 L464.5,125.9 L459.9,131.0 L455.5,136.2 L451.4,141.5 L447.5,146.9 L443.8,152.5 L440.5,158.1 L437.4,163.8 L434.5,169.7 L432.0,175.6 L429.7,181.6 L427.7,187.6 L426.0,193.7 L424.7,199.9 L423.6,206.1 M948.2,194.2 L947.1,187.9 L945.7,181.8 L944.0,175.6 L942.0,169.6 L939.7,163.6 L937.2,157.7 L934.3,151.9 L931.2,146.1 L927.8,140.5 L924.1,135.0 L920.2,129.5 L916.0,124.2 L911.6,119.0 L906.9,113.9 L902.0,108.9 L896.9,104.1 L891.6,99.4 L886.0,94.8 L880.3,90.4 L874.4,86.1 L868.3,81.9 L862.0,77.9 L855.5,74.1 L848.9,70.4 L842.1,66.8 L835.1,63.5 L828.1,60.2 L820.8,57.2 L813.5,54.3 L806.1,51.6 L798.5,49.0 L790.8,46.6 L783.0,44.4 L775.2,42.4 L767.2,40.5 L759.2,38.8 L751.1,37.3 L743.0,35.9 L734.8,34.8 L726.6,33.8 L718.3,33.0 L710.0,32.3 L701.7,31.9 L693.3,31.6 L685.0,31.5 L676.7,31.6 L668.3,31.9 L660.0,32.3 L651.7,33.0 L643.4,33.8 L635.2,34.8 L627.0,35.9 L618.9,37.3 L610.8,38.8 L602.8,40.5 L594.8,42.4 L587.0,44.4 L579.2,46.6 L571.5,49.0 L563.9,51.6 L556.5,54.3 L549.2,57.2 L541.9,60.2 L534.9,63.5 L527.9,66.8 L521.1,70.4 L514.5,74.1 L508.0,77.9 L501.7,81.9 L495.6,86.1 L489.7,90.4 L484.0,94.8 L478.4,99.4 L473.1,104.1 L468.0,108.9 L463.1,113.9 L458.4,119.0 L454.0,124.2 L449.8,129.5 L445.9,135.0 L442.2,140.5 L438.8,146.1 L435.7,151.9 L432.8,157.7 L430.3,163.6 L428.0,169.6 L426.0,175.6 L424.3,181.8 L422.9,187.9 L421.8,194.2 M950.0,182.0 L948.9,175.8 L947.5,169.6 L945.8,163.5 L943.8,157.5 L941.5,151.5 L938.9,145.6 L936.0,139.8 L932.8,134.0 L929.4,128.4 L925.7,122.8 L921.7,117.4 L917.5,112.1 L913.1,106.9 L908.4,101.8 L903.4,96.8 L898.3,92.0 L892.9,87.3 L887.3,82.7 L881.6,78.3 L875.6,74.0 L869.4,69.9 L863.1,65.9 L856.6,62.0 L849.9,58.3 L843.1,54.8 L836.1,51.4 L829.0,48.2 L821.7,45.1 L814.3,42.2 L806.8,39.5 L799.2,36.9 L791.5,34.6 L783.7,32.3 L775.7,30.3 L767.8,28.4 L759.7,26.7 L751.6,25.2 L743.4,23.9 L735.1,22.7 L726.8,21.7 L718.5,20.9 L710.2,20.3 L701.8,19.8 L693.4,19.6 L685.0,19.5 L676.6,19.6 L668.2,19.8 L659.8,20.3 L651.5,20.9 L643.2,21.7 L634.9,22.7 L626.6,23.9 L618.4,25.2 L610.3,26.7 L602.2,28.4 L594.3,30.3 L586.3,32.3 L578.5,34.6 L570.8,36.9 L563.2,39.5 L555.7,42.2 L548.3,45.1 L541.0,48.2 L533.9,51.4 L526.9,54.8 L520.1,58.3 L513.4,62.0 L506.9,65.9 L500.6,69.9 L494.4,74.0 L488.4,78.3 L482.7,82.7 L477.1,87.3 L471.7,92.0 L466.6,96.8 L461.6,101.8 L456.9,106.9 L452.5,112.1 L448.3,117.4 L444.3,122.8 L440.6,128.4 L437.2,134.0 L434.0,139.8 L431.1,145.6 L428.5,151.5 L426.2,157.5 L424.2,163.5 L422.5,169.6 L421.1,175.8 L420.0,182.0 M951.8,169.7 L950.7,163.5 L949.3,157.3 L947.6,151.2 L945.5,145.2 L943.2,139.2 L940.6,133.3 L937.7,127.5 L934.5,121.7 L931.0,116.1 L927.3,110.6 L923.3,105.1 L919.1,99.8 L914.6,94.6 L909.8,89.5 L904.9,84.6 L899.7,79.7 L894.3,75.0 L888.7,70.5 L882.8,66.0 L876.8,61.7 L870.6,57.6 L864.2,53.6 L857.7,49.8 L851.0,46.1 L844.1,42.5 L837.1,39.2 L829.9,36.0 L822.6,32.9 L815.1,30.0 L807.6,27.3 L799.9,24.7 L792.2,22.4 L784.3,20.1 L776.3,18.1 L768.3,16.2 L760.2,14.5 L752.0,13.0 L743.7,11.7 L735.4,10.5 L727.1,9.5 L718.7,8.7 L710.3,8.1 L701.9,7.7 L693.5,7.4 L685.0,7.3 L676.5,7.4 L668.1,7.7 L659.7,8.1 L651.3,8.7 L642.9,9.5 L634.6,10.5 L626.3,11.7 L618.0,13.0 L609.8,14.5 L601.7,16.2 L593.7,18.1 L585.7,20.1 L577.8,22.4 L570.1,24.7 L562.4,27.3 L554.9,30.0 L547.4,32.9 L540.1,36.0 L532.9,39.2 L525.9,42.5 L519.0,46.1 L512.3,49.8 L505.8,53.6 L499.4,57.6 L493.2,61.7 L487.2,66.0 L481.3,70.5 L475.7,75.0 L470.3,79.7 L465.1,84.6 L460.2,89.5 L455.4,94.6 L450.9,99.8 L446.7,105.1 L442.7,110.6 L439.0,116.1 L435.5,121.7 L432.3,127.5 L429.4,133.3 L426.8,139.2 L424.5,145.2 L422.4,151.2 L420.7,157.3 L419.3,163.5 L418.2,169.7 M902.7,488.8 L950.8,164.1 M900.8,478.0 L948.1,153.0 M898.0,467.4 L944.4,142.2 M894.4,457.0 L939.7,131.5 M890.0,446.9 L934.1,121.2 M884.9,437.0 L927.7,111.1 M879.0,427.5 L920.4,101.4 M872.5,418.3 L912.2,92.1 M865.3,409.5 L903.3,83.1 M857.6,401.0 L893.7,74.6 M849.2,393.0 L883.4,66.5 M840.3,385.4 L872.5,58.8 M830.8,378.3 L861.0,51.7 M820.9,371.7 L848.9,45.0 M810.6,365.5 L836.3,38.8 M799.8,359.9 L823.3,33.2 M788.7,354.8 L809.9,28.1 M777.3,350.3 L796.1,23.5 M765.6,346.2 L781.9,19.5 M753.6,342.8 L767.5,16.1 M741.4,339.9 L752.8,13.2 M729.1,337.6 L737.9,10.9 M716.6,335.8 L722.9,9.1 M704.0,334.7 L707.8,8.0 M691.3,334.1 L692.6,7.4 M678.7,334.1 L677.4,7.4 M666.0,334.7 L662.2,8.0 M653.4,335.8 L647.1,9.1 M640.9,337.6 L632.1,10.9 M628.6,339.9 L617.2,13.2 M616.4,342.8 L602.5,16.1 M604.4,346.2 L588.1,19.5 M592.7,350.3 L573.9,23.5 M581.3,354.8 L560.1,28.1 M570.2,359.9 L546.7,33.2 M559.4,365.5 L533.7,38.8 M549.1,371.7 L521.1,45.0 M539.2,378.3 L509.0,51.7 M529.7,385.4 L497.5,58.8 M520.8,393.0 L486.6,66.5 M512.4,401.0 L476.3,74.6 M504.7,409.5 L466.7,83.1 M497.5,418.3 L457.8,92.1 M491.0,427.5 L449.6,101.4 M485.1,437.0 L442.3,111.1 M480.0,446.9 L435.9,121.2 M475.6,457.0 L430.3,131.5 M472.0,467.4 L425.6,142.2 M469.2,478.0 L421.9,153.0 M467.3,488.8 L419.2,164.1" fill="none" stroke="#7b7b7b" stroke-width="1" shape-rendering="crispEdges"/>
<rect x="636.5" y="313.5" width="98.0" height="72.0" fill="#5a5a5a"/><path d="M636.5,313.5 V385.5 M641.5,313.5 V385.5 M646.5,313.5 V385.5 M650.5,313.5 V385.5 M655.5,313.5 V385.5 M660.5,313.5 V385.5 M664.5,313.5 V385.5 M669.5,313.5 V385.5 M674.5,313.5 V385.5 M678.5,313.5 V385.5 M683.5,313.5 V385.5 M688.5,313.5 V385.5 M692.5,313.5 V385.5 M697.5,313.5 V385.5 M702.5,313.5 V385.5 M706.5,313.5 V385.5 M711.5,313.5 V385.5 M716.5,313.5 V385.5 M720.5,313.5 V385.5 M725.5,313.5 V385.5 M730.5,313.5 V385.5 M734.5,313.5 V385.5 M636.5,314.5 H734.5 M636.5,317.5 H734.5 M636.5,320.5 H734.5 M636.5,324.5 H734.5 M636.5,327.5 H734.5 M636.5,331.5 H734.5 M636.5,334.5 H734.5 M636.5,338.5 H734.5 M636.5,341.5 H734.5 M636.5,344.5 H734.5 M636.5,348.5 H734.5 M636.5,351.5 H734.5 M636.5,355.5 H734.5 M636.5,358.5 H734.5 M636.5,362.5 H734.5 M636.5,365.5 H734.5 M636.5,368.5 H734.5 M636.5,372.5 H734.5 M636.5,375.5 H734.5 M636.5,379.5 H734.5 M636.5,382.5 H734.5 M636.5,386.5 H734.5" stroke="#424242" stroke-width="1" fill="none" shape-rendering="crispEdges"/><path d="M636.5,349.5 H734.5" stroke="#3e3e3e" stroke-width="2" shape-rendering="crispEdges"/>
<path d="M466.6,494.2 L466.1,500.3 L465.8,506.4 L465.9,512.5 L466.2,518.7 L466.7,524.8 L467.6,530.9 L468.7,537.1 L470.1,543.2 L471.8,549.3 L473.7,555.3 L475.9,561.3 L478.5,567.3 L481.2,573.2 L484.3,579.0 L487.6,584.8 L491.2,590.5 L495.1,596.0 L499.2,601.5 L503.6,606.9 L508.2,612.1 L513.1,617.2 L518.2,622.2 L523.6,627.1 L529.2,631.7 L535.0,636.3 L541.1,640.6 L547.3,644.8 L553.8,648.8 L560.4,652.6 L567.3,656.3 L574.3,659.7 L581.5,662.9 L588.8,665.9 L596.3,668.7 L603.9,671.2 L611.7,673.5 L619.5,675.6 L627.5,677.5 L635.6,679.1 L643.7,680.5 L651.9,681.6 L660.1,682.5 L668.4,683.1 L676.7,683.5 L685.0,683.6 L693.3,683.5 L701.6,683.1 L709.9,682.5 L718.1,681.6 L726.3,680.5 L734.4,679.1 L742.5,677.5 L750.5,675.6 L758.3,673.5 L766.1,671.2 L773.7,668.7 L781.2,665.9 L788.5,662.9 L795.7,659.7 L802.7,656.3 L809.6,652.6 L816.2,648.8 L822.7,644.8 L828.9,640.6 L835.0,636.3 L840.8,631.7 L846.4,627.1 L851.8,622.2 L856.9,617.2 L861.8,612.1 L866.4,606.9 L870.8,601.5 L874.9,596.0 L878.8,590.5 L882.4,584.8 L885.7,579.0 L888.8,573.2 L891.5,567.3 L894.1,561.3 L896.3,555.3 L898.2,549.3 L899.9,543.2 L901.3,537.1 L902.4,530.9 L903.3,524.8 L903.8,518.7 L904.1,512.5 L904.2,506.4 L903.9,500.3 L903.4,494.2 M465.3,485.9 L464.8,492.0 L464.6,498.1 L464.6,504.2 L464.9,510.3 L465.5,516.5 L466.3,522.7 L467.4,528.8 L468.8,534.9 L470.5,541.0 L472.5,547.1 L474.7,553.1 L477.2,559.1 L480.0,565.0 L483.1,570.8 L486.4,576.6 L490.0,582.3 L493.9,587.9 L498.1,593.4 L502.5,598.7 L507.1,604.0 L512.0,609.1 L517.2,614.1 L522.6,619.0 L528.2,623.7 L534.1,628.2 L540.2,632.6 L546.5,636.8 L553.0,640.8 L559.7,644.6 L566.6,648.2 L573.6,651.7 L580.8,654.9 L588.2,657.9 L595.8,660.7 L603.4,663.2 L611.2,665.6 L619.1,667.7 L627.1,669.5 L635.2,671.1 L643.4,672.5 L651.7,673.7 L659.9,674.5 L668.3,675.2 L676.6,675.5 L685.0,675.7 L693.4,675.5 L701.7,675.2 L710.1,674.5 L718.3,673.7 L726.6,672.5 L734.8,671.1 L742.9,669.5 L750.9,667.7 L758.8,665.6 L766.6,663.2 L774.2,660.7 L781.8,657.9 L789.2,654.9 L796.4,651.7 L803.4,648.2 L810.3,644.6 L817.0,640.8 L823.5,636.8 L829.8,632.6 L835.9,628.2 L841.8,623.7 L847.4,619.0 L852.8,614.1 L858.0,609.1 L862.9,604.0 L867.5,598.7 L871.9,593.4 L876.1,587.9 L880.0,582.3 L883.6,576.6 L886.9,570.8 L890.0,565.0 L892.8,559.1 L895.3,553.1 L897.5,547.1 L899.5,541.0 L901.2,534.9 L902.6,528.8 L903.7,522.7 L904.5,516.5 L905.1,510.3 L905.4,504.2 L905.4,498.1 L905.2,492.0 L904.7,485.9 M464.1,477.4 L463.6,483.5 L463.3,489.6 L463.3,495.8 L463.6,501.9 L464.2,508.1 L465.0,514.3 L466.2,520.4 L467.6,526.6 L469.3,532.7 L471.2,538.8 L473.5,544.8 L476.0,550.8 L478.8,556.7 L481.9,562.6 L485.2,568.3 L488.9,574.0 L492.8,579.6 L496.9,585.1 L501.4,590.5 L506.1,595.8 L511.0,600.9 L516.2,605.9 L521.6,610.8 L527.3,615.5 L533.2,620.1 L539.3,624.4 L545.6,628.6 L552.2,632.7 L558.9,636.5 L565.8,640.1 L572.9,643.6 L580.2,646.8 L587.6,649.8 L595.2,652.6 L602.9,655.2 L610.8,657.5 L618.7,659.6 L626.8,661.5 L634.9,663.1 L643.2,664.5 L651.4,665.6 L659.8,666.5 L668.2,667.1 L676.6,667.5 L685.0,667.6 L693.4,667.5 L701.8,667.1 L710.2,666.5 L718.6,665.6 L726.8,664.5 L735.1,663.1 L743.2,661.5 L751.3,659.6 L759.2,657.5 L767.1,655.2 L774.8,652.6 L782.4,649.8 L789.8,646.8 L797.1,643.6 L804.2,640.1 L811.1,636.5 L817.8,632.7 L824.4,628.6 L830.7,624.4 L836.8,620.1 L842.7,615.5 L848.4,610.8 L853.8,605.9 L859.0,600.9 L863.9,595.8 L868.6,590.5 L873.1,585.1 L877.2,579.6 L881.1,574.0 L884.8,568.3 L888.1,562.6 L891.2,556.7 L894.0,550.8 L896.5,544.8 L898.8,538.8 L900.7,532.7 L902.4,526.6 L903.8,520.4 L905.0,514.3 L905.8,508.1 L906.4,501.9 L906.7,495.8 L906.7,489.6 L906.4,483.5 L905.9,477.4 M462.8,468.9 L462.3,475.0 L462.0,481.1 L462.0,487.3 L462.3,493.4 L462.9,499.6 L463.7,505.8 L464.9,512.0 L466.3,518.1 L468.0,524.2 L470.0,530.3 L472.2,536.4 L474.7,542.4 L477.6,548.3 L480.7,554.2 L484.0,560.0 L487.7,565.7 L491.6,571.3 L495.8,576.8 L500.2,582.2 L505.0,587.5 L509.9,592.6 L515.1,597.6 L520.6,602.5 L526.3,607.2 L532.2,611.8 L538.4,616.2 L544.8,620.4 L551.3,624.4 L558.1,628.3 L565.1,631.9 L572.2,635.4 L579.5,638.6 L587.0,641.6 L594.7,644.4 L602.4,647.0 L610.3,649.3 L618.3,651.5 L626.4,653.3 L634.6,655.0 L642.9,656.3 L651.2,657.5 L659.6,658.4 L668.1,659.0 L676.5,659.4 L685.0,659.5 L693.5,659.4 L701.9,659.0 L710.4,658.4 L718.8,657.5 L727.1,656.3 L735.4,655.0 L743.6,653.3 L751.7,651.5 L759.7,649.3 L767.6,647.0 L775.3,644.4 L783.0,641.6 L790.5,638.6 L797.8,635.4 L804.9,631.9 L811.9,628.3 L818.7,624.4 L825.2,620.4 L831.6,616.2 L837.8,611.8 L843.7,607.2 L849.4,602.5 L854.9,597.6 L860.1,592.6 L865.0,587.5 L869.8,582.2 L874.2,576.8 L878.4,571.3 L882.3,565.7 L886.0,560.0 L889.3,554.2 L892.4,548.3 L895.3,542.4 L897.8,536.4 L900.0,530.3 L902.0,524.2 L903.7,518.1 L905.1,512.0 L906.3,505.8 L907.1,499.6 L907.7,493.4 L908.0,487.3 L908.0,481.1 L907.7,475.0 L907.2,468.9 M461.5,460.2 L461.0,466.4 L460.7,472.5 L460.7,478.7 L461.0,484.8 L461.6,491.0 L462.4,497.2 L463.6,503.4 L465.0,509.6 L466.7,515.7 L468.7,521.8 L470.9,527.8 L473.5,533.9 L476.3,539.8 L479.4,545.7 L482.8,551.5 L486.5,557.2 L490.4,562.8 L494.6,568.4 L499.1,573.8 L503.9,579.1 L508.9,584.2 L514.1,589.3 L519.6,594.1 L525.3,598.9 L531.3,603.4 L537.5,607.8 L543.9,612.1 L550.5,616.1 L557.3,620.0 L564.3,623.6 L571.5,627.1 L578.9,630.3 L586.4,633.3 L594.1,636.2 L601.9,638.7 L609.8,641.1 L617.9,643.2 L626.0,645.1 L634.3,646.7 L642.6,648.1 L651.0,649.2 L659.5,650.1 L668.0,650.7 L676.5,651.1 L685.0,651.3 L693.5,651.1 L702.0,650.7 L710.5,650.1 L719.0,649.2 L727.4,648.1 L735.7,646.7 L744.0,645.1 L752.1,643.2 L760.2,641.1 L768.1,638.7 L775.9,636.2 L783.6,633.3 L791.1,630.3 L798.5,627.1 L805.7,623.6 L812.7,620.0 L819.5,616.1 L826.1,612.1 L832.5,607.8 L838.7,603.4 L844.7,598.9 L850.4,594.1 L855.9,589.3 L861.1,584.2 L866.1,579.1 L870.9,573.8 L875.4,568.4 L879.6,562.8 L883.5,557.2 L887.2,551.5 L890.6,545.7 L893.7,539.8 L896.5,533.9 L899.1,527.8 L901.3,521.8 L903.3,515.7 L905.0,509.6 L906.4,503.4 L907.6,497.2 L908.4,491.0 L909.0,484.8 L909.3,478.7 L909.3,472.5 L909.0,466.4 L908.5,460.2 M460.2,451.5 L459.7,457.6 L459.4,463.8 L459.4,470.0 L459.7,476.1 L460.3,482.3 L461.1,488.5 L462.3,494.7 L463.7,500.9 L465.4,507.0 L467.4,513.2 L469.6,519.2 L472.2,525.2 L475.1,531.2 L478.2,537.1 L481.6,542.9 L485.3,548.6 L489.2,554.3 L493.5,559.8 L498.0,565.2 L502.7,570.5 L507.8,575.7 L513.0,580.8 L518.6,585.7 L524.3,590.4 L530.3,595.0 L536.6,599.4 L543.0,603.6 L549.7,607.7 L556.5,611.5 L563.6,615.2 L570.8,618.7 L578.2,621.9 L585.8,625.0 L593.5,627.8 L601.4,630.4 L609.4,632.7 L617.5,634.8 L625.7,636.7 L634.0,638.3 L642.4,639.7 L650.8,640.9 L659.3,641.8 L667.8,642.4 L676.4,642.8 L685.0,642.9 L693.6,642.8 L702.2,642.4 L710.7,641.8 L719.2,640.9 L727.6,639.7 L736.0,638.3 L744.3,636.7 L752.5,634.8 L760.6,632.7 L768.6,630.4 L776.5,627.8 L784.2,625.0 L791.8,621.9 L799.2,618.7 L806.4,615.2 L813.5,611.5 L820.3,607.7 L827.0,603.6 L833.4,599.4 L839.7,595.0 L845.7,590.4 L851.4,585.7 L857.0,580.8 L862.2,575.7 L867.3,570.5 L872.0,565.2 L876.5,559.8 L880.8,554.3 L884.7,548.6 L888.4,542.9 L891.8,537.1 L894.9,531.2 L897.8,525.2 L900.4,519.2 L902.6,513.2 L904.6,507.0 L906.3,500.9 L907.7,494.7 L908.9,488.5 L909.7,482.3 L910.3,476.1 L910.6,470.0 L910.6,463.8 L910.3,457.6 L909.8,451.5 M458.9,442.7 L458.3,448.8 L458.1,455.0 L458.1,461.1 L458.4,467.3 L458.9,473.5 L459.8,479.8 L460.9,486.0 L462.3,492.1 L464.1,498.3 L466.1,504.4 L468.3,510.5 L470.9,516.5 L473.8,522.5 L476.9,528.4 L480.3,534.2 L484.0,540.0 L488.0,545.6 L492.3,551.2 L496.8,556.6 L501.6,561.9 L506.7,567.1 L512.0,572.2 L517.5,577.1 L523.3,581.8 L529.4,586.4 L535.6,590.8 L542.1,595.1 L548.8,599.1 L555.7,603.0 L562.8,606.7 L570.1,610.2 L577.5,613.4 L585.2,616.5 L592.9,619.3 L600.8,621.9 L608.9,624.2 L617.0,626.4 L625.3,628.2 L633.6,629.9 L642.1,631.3 L650.6,632.4 L659.1,633.3 L667.7,634.0 L676.4,634.3 L685.0,634.5 L693.6,634.3 L702.3,634.0 L710.9,633.3 L719.4,632.4 L727.9,631.3 L736.4,629.9 L744.7,628.2 L753.0,626.4 L761.1,624.2 L769.2,621.9 L777.1,619.3 L784.8,616.5 L792.5,613.4 L799.9,610.2 L807.2,606.7 L814.3,603.0 L821.2,599.1 L827.9,595.1 L834.4,590.8 L840.6,586.4 L846.7,581.8 L852.5,577.1 L858.0,572.2 L863.3,567.1 L868.4,561.9 L873.2,556.6 L877.7,551.2 L882.0,545.6 L886.0,540.0 L889.7,534.2 L893.1,528.4 L896.2,522.5 L899.1,516.5 L901.7,510.5 L903.9,504.4 L905.9,498.3 L907.7,492.1 L909.1,486.0 L910.2,479.8 L911.1,473.5 L911.6,467.3 L911.9,461.1 L911.9,455.0 L911.7,448.8 L911.1,442.7 M457.6,433.7 L457.0,439.8 L456.7,446.0 L456.7,452.2 L457.0,458.4 L457.6,464.6 L458.4,470.9 L459.6,477.1 L461.0,483.3 L462.7,489.4 L464.7,495.6 L467.0,501.7 L469.6,507.7 L472.5,513.7 L475.6,519.6 L479.1,525.4 L482.8,531.2 L486.8,536.9 L491.1,542.4 L495.6,547.9 L500.5,553.2 L505.5,558.4 L510.9,563.4 L516.5,568.4 L522.3,573.1 L528.4,577.7 L534.7,582.2 L541.2,586.4 L547.9,590.5 L554.9,594.4 L562.0,598.1 L569.3,601.5 L576.8,604.8 L584.5,607.9 L592.3,610.7 L600.3,613.3 L608.4,615.6 L616.6,617.8 L624.9,619.7 L633.3,621.3 L641.8,622.7 L650.4,623.9 L659.0,624.8 L667.6,625.4 L676.3,625.8 L685.0,625.9 L693.7,625.8 L702.4,625.4 L711.0,624.8 L719.6,623.9 L728.2,622.7 L736.7,621.3 L745.1,619.7 L753.4,617.8 L761.6,615.6 L769.7,613.3 L777.7,610.7 L785.5,607.9 L793.2,604.8 L800.7,601.5 L808.0,598.1 L815.1,594.4 L822.1,590.5 L828.8,586.4 L835.3,582.2 L841.6,577.7 L847.7,573.1 L853.5,568.4 L859.1,563.4 L864.5,558.4 L869.5,553.2 L874.4,547.9 L878.9,542.4 L883.2,536.9 L887.2,531.2 L890.9,525.4 L894.4,519.6 L897.5,513.7 L900.4,507.7 L903.0,501.7 L905.3,495.6 L907.3,489.4 L909.0,483.3 L910.4,477.1 L911.6,470.9 L912.4,464.6 L913.0,458.4 L913.3,452.2 L913.3,446.0 L913.0,439.8 L912.4,433.7 M456.2,424.7 L455.6,430.8 L455.4,437.0 L455.4,443.2 L455.6,449.4 L456.2,455.6 L457.1,461.9 L458.2,468.1 L459.6,474.3 L461.4,480.5 L463.4,486.6 L465.7,492.7 L468.3,498.8 L471.2,504.8 L474.3,510.7 L477.8,516.5 L481.5,522.3 L485.6,528.0 L489.9,533.5 L494.4,539.0 L499.3,544.3 L504.4,549.6 L509.8,554.6 L515.4,559.6 L521.3,564.3 L527.4,568.9 L533.7,573.4 L540.3,577.7 L547.1,581.7 L554.0,585.6 L561.2,589.3 L568.6,592.8 L576.1,596.1 L583.9,599.1 L591.7,602.0 L599.7,604.6 L607.9,607.0 L616.1,609.1 L624.5,611.0 L633.0,612.6 L641.5,614.0 L650.1,615.2 L658.8,616.1 L667.5,616.7 L676.3,617.1 L685.0,617.2 L693.7,617.1 L702.5,616.7 L711.2,616.1 L719.9,615.2 L728.5,614.0 L737.0,612.6 L745.5,611.0 L753.9,609.1 L762.1,607.0 L770.3,604.6 L778.3,602.0 L786.1,599.1 L793.9,596.1 L801.4,592.8 L808.8,589.3 L816.0,585.6 L822.9,581.7 L829.7,577.7 L836.3,573.4 L842.6,568.9 L848.7,564.3 L854.6,559.6 L860.2,554.6 L865.6,549.6 L870.7,544.3 L875.6,539.0 L880.1,533.5 L884.4,528.0 L888.5,522.3 L892.2,516.5 L895.7,510.7 L898.8,504.8 L901.7,498.8 L904.3,492.7 L906.6,486.6 L908.6,480.5 L910.4,474.3 L911.8,468.1 L912.9,461.9 L913.8,455.6 L914.4,449.4 L914.6,443.2 L914.6,437.0 L914.4,430.8 L913.8,424.7 M454.8,415.5 L454.3,421.6 L454.0,427.8 L454.0,434.1 L454.2,440.3 L454.8,446.5 L455.7,452.8 L456.8,459.0 L458.3,465.2 L460.0,471.4 L462.0,477.5 L464.3,483.7 L466.9,489.7 L469.8,495.7 L473.0,501.7 L476.5,507.5 L480.3,513.3 L484.3,519.0 L488.6,524.6 L493.2,530.0 L498.1,535.4 L503.3,540.6 L508.7,545.7 L514.3,550.6 L520.2,555.4 L526.4,560.0 L532.7,564.5 L539.4,568.8 L546.2,572.9 L553.2,576.8 L560.4,580.5 L567.8,584.0 L575.4,587.2 L583.2,590.3 L591.1,593.2 L599.2,595.8 L607.4,598.1 L615.7,600.3 L624.1,602.2 L632.6,603.8 L641.2,605.2 L649.9,606.4 L658.6,607.3 L667.4,607.9 L676.2,608.3 L685.0,608.4 L693.8,608.3 L702.6,607.9 L711.4,607.3 L720.1,606.4 L728.8,605.2 L737.4,603.8 L745.9,602.2 L754.3,600.3 L762.6,598.1 L770.8,595.8 L778.9,593.2 L786.8,590.3 L794.6,587.2 L802.2,584.0 L809.6,580.5 L816.8,576.8 L823.8,572.9 L830.6,568.8 L837.3,564.5 L843.6,560.0 L849.8,555.4 L855.7,550.6 L861.3,545.7 L866.7,540.6 L871.9,535.4 L876.8,530.0 L881.4,524.6 L885.7,519.0 L889.7,513.3 L893.5,507.5 L897.0,501.7 L900.2,495.7 L903.1,489.7 L905.7,483.7 L908.0,477.5 L910.0,471.4 L911.7,465.2 L913.2,459.0 L914.3,452.8 L915.2,446.5 L915.8,440.3 L916.0,434.1 L916.0,427.8 L915.7,421.6 L915.2,415.5 M453.5,406.2 L452.9,412.4 L452.6,418.6 L452.6,424.8 L452.8,431.0 L453.4,437.3 L454.3,443.5 L455.4,449.8 L456.9,456.0 L458.6,462.2 L460.6,468.4 L463.0,474.5 L465.6,480.6 L468.5,486.6 L471.7,492.5 L475.2,498.4 L479.0,504.2 L483.0,509.9 L487.4,515.5 L492.0,521.0 L496.9,526.3 L502.1,531.6 L507.5,536.6 L513.2,541.6 L519.2,546.4 L525.3,551.0 L531.8,555.5 L538.4,559.8 L545.3,563.9 L552.3,567.8 L559.6,571.5 L567.1,575.0 L574.7,578.3 L582.5,581.4 L590.5,584.2 L598.6,586.8 L606.9,589.2 L615.2,591.4 L623.7,593.3 L632.3,594.9 L641.0,596.3 L649.7,597.5 L658.5,598.4 L667.3,599.0 L676.1,599.4 L685.0,599.5 L693.9,599.4 L702.7,599.0 L711.5,598.4 L720.3,597.5 L729.0,596.3 L737.7,594.9 L746.3,593.3 L754.8,591.4 L763.1,589.2 L771.4,586.8 L779.5,584.2 L787.5,581.4 L795.3,578.3 L802.9,575.0 L810.4,571.5 L817.7,567.8 L824.7,563.9 L831.6,559.8 L838.2,555.5 L844.7,551.0 L850.8,546.4 L856.8,541.6 L862.5,536.6 L867.9,531.6 L873.1,526.3 L878.0,521.0 L882.6,515.5 L887.0,509.9 L891.0,504.2 L894.8,498.4 L898.3,492.5 L901.5,486.6 L904.4,480.6 L907.0,474.5 L909.4,468.4 L911.4,462.2 L913.1,456.0 L914.6,449.8 L915.7,443.5 L916.6,437.3 L917.2,431.0 L917.4,424.8 L917.4,418.6 L917.1,412.4 L916.5,406.2 M452.1,396.8 L451.5,403.0 L451.2,409.2 L451.2,415.4 L451.4,421.7 L452.0,428.0 L452.8,434.2 L454.0,440.5 L455.4,446.7 L457.2,452.9 L459.2,459.1 L461.6,465.2 L464.2,471.3 L467.1,477.3 L470.3,483.3 L473.9,489.2 L477.7,495.0 L481.8,500.7 L486.1,506.3 L490.8,511.8 L495.7,517.1 L500.9,522.4 L506.4,527.5 L512.1,532.4 L518.1,537.3 L524.3,541.9 L530.8,546.4 L537.5,550.7 L544.4,554.8 L551.5,558.7 L558.8,562.4 L566.3,565.9 L574.0,569.2 L581.9,572.3 L589.9,575.2 L598.1,577.8 L606.4,580.2 L614.8,582.3 L623.3,584.2 L631.9,585.9 L640.7,587.3 L649.4,588.5 L658.3,589.4 L667.2,590.0 L676.1,590.4 L685.0,590.5 L693.9,590.4 L702.8,590.0 L711.7,589.4 L720.6,588.5 L729.3,587.3 L738.1,585.9 L746.7,584.2 L755.2,582.3 L763.6,580.2 L771.9,577.8 L780.1,575.2 L788.1,572.3 L796.0,569.2 L803.7,565.9 L811.2,562.4 L818.5,558.7 L825.6,554.8 L832.5,550.7 L839.2,546.4 L845.7,541.9 L851.9,537.3 L857.9,532.4 L863.6,527.5 L869.1,522.4 L874.3,517.1 L879.2,511.8 L883.9,506.3 L888.2,500.7 L892.3,495.0 L896.1,489.2 L899.7,483.3 L902.9,477.3 L905.8,471.3 L908.4,465.2 L910.8,459.1 L912.8,452.9 L914.6,446.7 L916.0,440.5 L917.2,434.2 L918.0,428.0 L918.6,421.7 L918.8,415.4 L918.8,409.2 L918.5,403.0 L917.9,396.8 M450.6,387.3 L450.0,393.5 L449.7,399.7 L449.7,406.0 L450.0,412.2 L450.5,418.5 L451.4,424.8 L452.6,431.0 L454.0,437.3 L455.8,443.5 L457.8,449.7 L460.2,455.8 L462.8,461.9 L465.7,467.9 L469.0,473.9 L472.5,479.8 L476.3,485.6 L480.5,491.3 L484.9,497.0 L489.5,502.5 L494.5,507.8 L499.7,513.1 L505.2,518.2 L511.0,523.2 L517.0,528.0 L523.3,532.6 L529.8,537.1 L536.5,541.4 L543.4,545.6 L550.6,549.5 L558.0,553.2 L565.5,556.7 L573.3,560.0 L581.2,563.1 L589.3,566.0 L597.5,568.6 L605.8,571.0 L614.3,573.2 L622.9,575.1 L631.6,576.7 L640.4,578.2 L649.2,579.3 L658.1,580.2 L667.0,580.9 L676.0,581.3 L685.0,581.4 L694.0,581.3 L703.0,580.9 L711.9,580.2 L720.8,579.3 L729.6,578.2 L738.4,576.7 L747.1,575.1 L755.7,573.2 L764.2,571.0 L772.5,568.6 L780.7,566.0 L788.8,563.1 L796.7,560.0 L804.5,556.7 L812.0,553.2 L819.4,549.5 L826.6,545.6 L833.5,541.4 L840.2,537.1 L846.7,532.6 L853.0,528.0 L859.0,523.2 L864.8,518.2 L870.3,513.1 L875.5,507.8 L880.5,502.5 L885.1,497.0 L889.5,491.3 L893.7,485.6 L897.5,479.8 L901.0,473.9 L904.3,467.9 L907.2,461.9 L909.8,455.8 L912.2,449.7 L914.2,443.5 L916.0,437.3 L917.4,431.0 L918.6,424.8 L919.5,418.5 L920.0,412.2 L920.3,406.0 L920.3,399.7 L920.0,393.5 L919.4,387.3 M449.2,377.7 L448.6,383.9 L448.3,390.1 L448.3,396.4 L448.5,402.6 L449.1,408.9 L449.9,415.2 L451.1,421.5 L452.6,427.7 L454.3,433.9 L456.4,440.1 L458.7,446.3 L461.4,452.4 L464.3,458.4 L467.6,464.4 L471.2,470.3 L475.0,476.2 L479.1,481.9 L483.6,487.5 L488.3,493.0 L493.3,498.4 L498.5,503.7 L504.1,508.8 L509.8,513.8 L515.9,518.6 L522.2,523.3 L528.7,527.8 L535.5,532.1 L542.5,536.2 L549.7,540.1 L557.1,543.9 L564.7,547.4 L572.5,550.7 L580.5,553.8 L588.6,556.7 L596.9,559.3 L605.3,561.7 L613.8,563.9 L622.5,565.8 L631.2,567.5 L640.1,568.9 L649.0,570.0 L657.9,571.0 L666.9,571.6 L676.0,572.0 L685.0,572.1 L694.0,572.0 L703.1,571.6 L712.1,571.0 L721.0,570.0 L729.9,568.9 L738.8,567.5 L747.5,565.8 L756.2,563.9 L764.7,561.7 L773.1,559.3 L781.4,556.7 L789.5,553.8 L797.5,550.7 L805.3,547.4 L812.9,543.9 L820.3,540.1 L827.5,536.2 L834.5,532.1 L841.3,527.8 L847.8,523.3 L854.1,518.6 L860.2,513.8 L865.9,508.8 L871.5,503.7 L876.7,498.4 L881.7,493.0 L886.4,487.5 L890.9,481.9 L895.0,476.2 L898.8,470.3 L902.4,464.4 L905.7,458.4 L908.6,452.4 L911.3,446.3 L913.6,440.1 L915.7,433.9 L917.4,427.7 L918.9,421.5 L920.1,415.2 L920.9,408.9 L921.5,402.6 L921.7,396.4 L921.7,390.1 L921.4,383.9 L920.8,377.7 M447.7,368.0 L447.1,374.2 L446.8,380.4 L446.8,386.7 L447.1,392.9 L447.6,399.2 L448.5,405.5 L449.6,411.8 L451.1,418.0 L452.9,424.3 L454.9,430.5 L457.3,436.7 L460.0,442.8 L462.9,448.8 L466.2,454.8 L469.8,460.7 L473.6,466.6 L477.8,472.3 L482.3,477.9 L487.0,483.5 L492.0,488.9 L497.3,494.1 L502.9,499.3 L508.7,504.3 L514.8,509.1 L521.1,513.8 L527.7,518.3 L534.5,522.6 L541.6,526.7 L548.8,530.7 L556.3,534.4 L563.9,538.0 L571.8,541.3 L579.8,544.4 L588.0,547.3 L596.3,549.9 L604.8,552.3 L613.4,554.5 L622.1,556.4 L630.9,558.1 L639.8,559.5 L648.7,560.7 L657.7,561.6 L666.8,562.2 L675.9,562.6 L685.0,562.7 L694.1,562.6 L703.2,562.2 L712.3,561.6 L721.3,560.7 L730.2,559.5 L739.1,558.1 L747.9,556.4 L756.6,554.5 L765.2,552.3 L773.7,549.9 L782.0,547.3 L790.2,544.4 L798.2,541.3 L806.1,538.0 L813.7,534.4 L821.2,530.7 L828.4,526.7 L835.5,522.6 L842.3,518.3 L848.9,513.8 L855.2,509.1 L861.3,504.3 L867.1,499.3 L872.7,494.1 L878.0,488.9 L883.0,483.5 L887.7,477.9 L892.2,472.3 L896.4,466.6 L900.2,460.7 L903.8,454.8 L907.1,448.8 L910.0,442.8 L912.7,436.7 L915.1,430.5 L917.1,424.3 L918.9,418.0 L920.4,411.8 L921.5,405.5 L922.4,399.2 L922.9,392.9 L923.2,386.7 L923.2,380.4 L922.9,374.2 L922.3,368.0 M446.3,358.1 L445.7,364.3 L445.3,370.6 L445.3,376.8 L445.6,383.1 L446.1,389.4 L447.0,395.7 L448.1,402.0 L449.6,408.3 L451.4,414.5 L453.5,420.7 L455.8,426.9 L458.5,433.0 L461.5,439.1 L464.8,445.1 L468.4,451.0 L472.3,456.9 L476.5,462.6 L480.9,468.2 L485.7,473.8 L490.7,479.2 L496.1,484.5 L501.7,489.6 L507.5,494.6 L513.6,499.5 L520.0,504.2 L526.6,508.7 L533.5,513.0 L540.6,517.1 L547.9,521.1 L555.4,524.8 L563.1,528.4 L571.0,531.7 L579.1,534.8 L587.3,537.7 L595.7,540.4 L604.2,542.8 L612.9,544.9 L621.6,546.9 L630.5,548.5 L639.5,550.0 L648.5,551.1 L657.6,552.0 L666.7,552.7 L675.8,553.1 L685.0,553.2 L694.2,553.1 L703.3,552.7 L712.4,552.0 L721.5,551.1 L730.5,550.0 L739.5,548.5 L748.4,546.9 L757.1,544.9 L765.8,542.8 L774.3,540.4 L782.7,537.7 L790.9,534.8 L799.0,531.7 L806.9,528.4 L814.6,524.8 L822.1,521.1 L829.4,517.1 L836.5,513.0 L843.4,508.7 L850.0,504.2 L856.4,499.5 L862.5,494.6 L868.3,489.6 L873.9,484.5 L879.3,479.2 L884.3,473.8 L889.1,468.2 L893.5,462.6 L897.7,456.9 L901.6,451.0 L905.2,445.1 L908.5,439.1 L911.5,433.0 L914.2,426.9 L916.5,420.7 L918.6,414.5 L920.4,408.3 L921.9,402.0 L923.0,395.7 L923.9,389.4 L924.4,383.1 L924.7,376.8 L924.7,370.6 L924.3,364.3 L923.7,358.1 M444.8,348.1 L444.2,354.4 L443.8,360.6 L443.8,366.9 L444.0,373.2 L444.6,379.5 L445.5,385.8 L446.6,392.1 L448.1,398.3 L449.9,404.6 L452.0,410.8 L454.4,417.0 L457.0,423.1 L460.1,429.2 L463.4,435.2 L467.0,441.2 L470.9,447.0 L475.1,452.8 L479.6,458.4 L484.4,464.0 L489.5,469.4 L494.8,474.7 L500.4,479.8 L506.3,484.9 L512.5,489.7 L518.9,494.4 L525.6,498.9 L532.5,503.3 L539.6,507.4 L547.0,511.4 L554.5,515.1 L562.3,518.7 L570.2,522.0 L578.4,525.1 L586.6,528.0 L595.1,530.7 L603.7,533.1 L612.4,535.3 L621.2,537.2 L630.1,538.9 L639.1,540.3 L648.2,541.5 L657.4,542.4 L666.6,543.1 L675.8,543.4 L685.0,543.6 L694.2,543.4 L703.4,543.1 L712.6,542.4 L721.8,541.5 L730.9,540.3 L739.9,538.9 L748.8,537.2 L757.6,535.3 L766.3,533.1 L774.9,530.7 L783.4,528.0 L791.6,525.1 L799.8,522.0 L807.7,518.7 L815.5,515.1 L823.0,511.4 L830.4,507.4 L837.5,503.3 L844.4,498.9 L851.1,494.4 L857.5,489.7 L863.7,484.9 L869.6,479.8 L875.2,474.7 L880.5,469.4 L885.6,464.0 L890.4,458.4 L894.9,452.8 L899.1,447.0 L903.0,441.2 L906.6,435.2 L909.9,429.2 L913.0,423.1 L915.6,417.0 L918.0,410.8 L920.1,404.6 L921.9,398.3 L923.4,392.1 L924.5,385.8 L925.4,379.5 L926.0,373.2 L926.2,366.9 L926.2,360.6 L925.8,354.4 L925.2,348.1 M443.3,338.0 L442.6,344.3 L442.3,350.5 L442.3,356.8 L442.5,363.1 L443.1,369.4 L443.9,375.7 L445.1,382.0 L446.6,388.3 L448.4,394.6 L450.5,400.8 L452.9,407.0 L455.6,413.1 L458.6,419.2 L461.9,425.2 L465.5,431.2 L469.5,437.0 L473.7,442.8 L478.2,448.5 L483.0,454.0 L488.1,459.5 L493.5,464.8 L499.2,469.9 L505.1,474.9 L511.3,479.8 L517.8,484.5 L524.5,489.0 L531.4,493.4 L538.6,497.6 L546.0,501.5 L553.6,505.3 L561.4,508.8 L569.4,512.2 L577.6,515.3 L586.0,518.2 L594.5,520.9 L603.1,523.3 L611.9,525.5 L620.8,527.4 L629.8,529.1 L638.8,530.5 L648.0,531.7 L657.2,532.6 L666.4,533.3 L675.7,533.7 L685.0,533.8 L694.3,533.7 L703.6,533.3 L712.8,532.6 L722.0,531.7 L731.2,530.5 L740.2,529.1 L749.2,527.4 L758.1,525.5 L766.9,523.3 L775.5,520.9 L784.0,518.2 L792.4,515.3 L800.6,512.2 L808.6,508.8 L816.4,505.3 L824.0,501.5 L831.4,497.6 L838.6,493.4 L845.5,489.0 L852.2,484.5 L858.7,479.8 L864.9,474.9 L870.8,469.9 L876.5,464.8 L881.9,459.5 L887.0,454.0 L891.8,448.5 L896.3,442.8 L900.5,437.0 L904.5,431.2 L908.1,425.2 L911.4,419.2 L914.4,413.1 L917.1,407.0 L919.5,400.8 L921.6,394.6 L923.4,388.3 L924.9,382.0 L926.1,375.7 L926.9,369.4 L927.5,363.1 L927.7,356.8 L927.7,350.5 L927.4,344.3 L926.7,338.0 M441.8,327.8 L441.1,334.0 L440.8,340.3 L440.7,346.6 L441.0,352.9 L441.5,359.2 L442.4,365.5 L443.6,371.8 L445.0,378.1 L446.8,384.4 L448.9,390.6 L451.3,396.8 L454.1,403.0 L457.1,409.1 L460.4,415.1 L464.1,421.1 L468.0,426.9 L472.3,432.7 L476.8,438.4 L481.7,444.0 L486.8,449.4 L492.2,454.7 L497.9,459.9 L503.9,464.9 L510.2,469.8 L516.7,474.5 L523.4,479.0 L530.4,483.4 L537.6,487.6 L545.1,491.5 L552.7,495.3 L560.6,498.9 L568.7,502.2 L576.9,505.4 L585.3,508.3 L593.8,510.9 L602.5,513.4 L611.4,515.5 L620.3,517.5 L629.4,519.2 L638.5,520.6 L647.7,521.8 L657.0,522.7 L666.3,523.4 L675.6,523.7 L685.0,523.9 L694.4,523.7 L703.7,523.4 L713.0,522.7 L722.3,521.8 L731.5,520.6 L740.6,519.2 L749.7,517.5 L758.6,515.5 L767.5,513.4 L776.2,510.9 L784.7,508.3 L793.1,505.4 L801.3,502.2 L809.4,498.9 L817.3,495.3 L824.9,491.5 L832.4,487.6 L839.6,483.4 L846.6,479.0 L853.3,474.5 L859.8,469.8 L866.1,464.9 L872.1,459.9 L877.8,454.7 L883.2,449.4 L888.3,444.0 L893.2,438.4 L897.7,432.7 L902.0,426.9 L905.9,421.1 L909.6,415.1 L912.9,409.1 L915.9,403.0 L918.7,396.8 L921.1,390.6 L923.2,384.4 L925.0,378.1 L926.4,371.8 L927.6,365.5 L928.5,359.2 L929.0,352.9 L929.3,346.6 L929.2,340.3 L928.9,334.0 L928.2,327.8 M440.2,317.5 L439.6,323.7 L439.2,330.0 L439.1,336.2 L439.4,342.6 L439.9,348.9 L440.8,355.2 L442.0,361.5 L443.5,367.8 L445.3,374.1 L447.4,380.3 L449.8,386.6 L452.5,392.7 L455.6,398.8 L458.9,404.9 L462.6,410.8 L466.6,416.7 L470.9,422.5 L475.4,428.2 L480.3,433.7 L485.5,439.2 L490.9,444.5 L496.7,449.7 L502.7,454.7 L509.0,459.6 L515.5,464.3 L522.3,468.9 L529.3,473.3 L536.6,477.4 L544.1,481.4 L551.8,485.2 L559.7,488.8 L567.8,492.1 L576.1,495.3 L584.6,498.2 L593.2,500.8 L602.0,503.3 L610.9,505.5 L619.9,507.4 L629.0,509.1 L638.2,510.5 L647.5,511.7 L656.8,512.6 L666.2,513.3 L675.6,513.7 L685.0,513.8 L694.4,513.7 L703.8,513.3 L713.2,512.6 L722.5,511.7 L731.8,510.5 L741.0,509.1 L750.1,507.4 L759.1,505.5 L768.0,503.3 L776.8,500.8 L785.4,498.2 L793.9,495.3 L802.2,492.1 L810.3,488.8 L818.2,485.2 L825.9,481.4 L833.4,477.4 L840.7,473.3 L847.7,468.9 L854.5,464.3 L861.0,459.6 L867.3,454.7 L873.3,449.7 L879.1,444.5 L884.5,439.2 L889.7,433.7 L894.6,428.2 L899.1,422.5 L903.4,416.7 L907.4,410.8 L911.1,404.9 L914.4,398.8 L917.5,392.7 L920.2,386.6 L922.6,380.3 L924.7,374.1 L926.5,367.8 L928.0,361.5 L929.2,355.2 L930.1,348.9 L930.6,342.6 L930.9,336.2 L930.8,330.0 L930.4,323.7 L929.8,317.5 M438.6,307.0 L438.0,313.2 L437.6,319.5 L437.6,325.8 L437.8,332.1 L438.4,338.4 L439.2,344.7 L440.4,351.1 L441.9,357.4 L443.7,363.7 L445.8,369.9 L448.2,376.1 L451.0,382.3 L454.0,388.4 L457.4,394.5 L461.1,400.4 L465.1,406.3 L469.4,412.1 L474.0,417.8 L478.9,423.4 L484.1,428.9 L489.6,434.2 L495.4,439.4 L501.4,444.4 L507.8,449.3 L514.3,454.0 L521.2,458.6 L528.3,463.0 L535.6,467.2 L543.1,471.2 L550.9,474.9 L558.9,478.5 L567.0,481.9 L575.4,485.0 L583.9,487.9 L592.6,490.6 L601.4,493.1 L610.3,495.3 L619.4,497.2 L628.6,498.9 L637.9,500.3 L647.2,501.5 L656.6,502.4 L666.0,503.1 L675.5,503.5 L685.0,503.6 L694.5,503.5 L704.0,503.1 L713.4,502.4 L722.8,501.5 L732.1,500.3 L741.4,498.9 L750.6,497.2 L759.7,495.3 L768.6,493.1 L777.4,490.6 L786.1,487.9 L794.6,485.0 L803.0,481.9 L811.1,478.5 L819.1,474.9 L826.9,471.2 L834.4,467.2 L841.7,463.0 L848.8,458.6 L855.7,454.0 L862.2,449.3 L868.6,444.4 L874.6,439.4 L880.4,434.2 L885.9,428.9 L891.1,423.4 L896.0,417.8 L900.6,412.1 L904.9,406.3 L908.9,400.4 L912.6,394.5 L916.0,388.4 L919.0,382.3 L921.8,376.1 L924.2,369.9 L926.3,363.7 L928.1,357.4 L929.6,351.1 L930.8,344.7 L931.6,338.4 L932.2,332.1 L932.4,325.8 L932.4,319.5 L932.0,313.2 L931.4,307.0 M437.1,296.3 L436.4,302.6 L436.0,308.9 L436.0,315.2 L436.2,321.5 L436.7,327.8 L437.6,334.1 L438.8,340.5 L440.3,346.8 L442.1,353.1 L444.2,359.4 L446.7,365.6 L449.4,371.8 L452.5,377.9 L455.9,383.9 L459.6,389.9 L463.6,395.8 L468.0,401.6 L472.6,407.3 L477.5,412.9 L482.8,418.4 L488.3,423.7 L494.1,428.9 L500.2,434.0 L506.5,438.9 L513.2,443.6 L520.0,448.2 L527.2,452.6 L534.5,456.7 L542.1,460.7 L550.0,464.5 L558.0,468.1 L566.2,471.5 L574.6,474.6 L583.2,477.6 L591.9,480.2 L600.8,482.7 L609.8,484.9 L618.9,486.8 L628.2,488.5 L637.5,490.0 L646.9,491.2 L656.4,492.1 L665.9,492.8 L675.4,493.2 L685.0,493.3 L694.6,493.2 L704.1,492.8 L713.6,492.1 L723.1,491.2 L732.5,490.0 L741.8,488.5 L751.1,486.8 L760.2,484.9 L769.2,482.7 L778.1,480.2 L786.8,477.6 L795.4,474.6 L803.8,471.5 L812.0,468.1 L820.0,464.5 L827.9,460.7 L835.5,456.7 L842.8,452.6 L850.0,448.2 L856.8,443.6 L863.5,438.9 L869.8,434.0 L875.9,428.9 L881.7,423.7 L887.2,418.4 L892.5,412.9 L897.4,407.3 L902.0,401.6 L906.4,395.8 L910.4,389.9 L914.1,383.9 L917.5,377.9 L920.6,371.8 L923.3,365.6 L925.8,359.4 L927.9,353.1 L929.7,346.8 L931.2,340.5 L932.4,334.1 L933.3,327.8 L933.8,321.5 L934.0,315.2 L934.0,308.9 L933.6,302.6 L932.9,296.3 M435.5,285.6 L434.8,291.8 L434.4,298.1 L434.3,304.4 L434.6,310.7 L435.1,317.1 L436.0,323.4 L437.2,329.8 L438.6,336.1 L440.5,342.4 L442.6,348.7 L445.1,354.9 L447.8,361.1 L450.9,367.2 L454.3,373.3 L458.1,379.2 L462.1,385.2 L466.5,391.0 L471.1,396.7 L476.1,402.3 L481.4,407.7 L486.9,413.1 L492.8,418.3 L498.9,423.4 L505.3,428.3 L512.0,433.0 L518.9,437.6 L526.1,442.0 L533.5,446.2 L541.1,450.2 L549.0,454.0 L557.1,457.6 L565.4,461.0 L573.8,464.1 L582.5,467.0 L591.3,469.7 L600.2,472.2 L609.3,474.4 L618.5,476.3 L627.8,478.0 L637.2,479.5 L646.6,480.7 L656.2,481.6 L665.8,482.3 L675.4,482.7 L685.0,482.8 L694.6,482.7 L704.2,482.3 L713.8,481.6 L723.4,480.7 L732.8,479.5 L742.2,478.0 L751.5,476.3 L760.7,474.4 L769.8,472.2 L778.7,469.7 L787.5,467.0 L796.2,464.1 L804.6,461.0 L812.9,457.6 L821.0,454.0 L828.9,450.2 L836.5,446.2 L843.9,442.0 L851.1,437.6 L858.0,433.0 L864.7,428.3 L871.1,423.4 L877.2,418.3 L883.1,413.1 L888.6,407.7 L893.9,402.3 L898.9,396.7 L903.5,391.0 L907.9,385.2 L911.9,379.2 L915.7,373.3 L919.1,367.2 L922.2,361.1 L924.9,354.9 L927.4,348.7 L929.5,342.4 L931.4,336.1 L932.8,329.8 L934.0,323.4 L934.9,317.1 L935.4,310.7 L935.7,304.4 L935.6,298.1 L935.2,291.8 L934.5,285.6 M433.8,274.7 L433.1,280.9 L432.8,287.2 L432.7,293.5 L432.9,299.8 L433.5,306.2 L434.3,312.5 L435.5,318.9 L437.0,325.2 L438.8,331.5 L441.0,337.8 L443.4,344.0 L446.2,350.2 L449.3,356.4 L452.8,362.4 L456.5,368.4 L460.6,374.3 L465.0,380.2 L469.7,385.9 L474.6,391.5 L479.9,397.0 L485.5,402.3 L491.4,407.5 L497.6,412.6 L504.0,417.5 L510.7,422.3 L517.7,426.9 L524.9,431.3 L532.4,435.5 L540.1,439.5 L548.0,443.3 L556.2,446.9 L564.5,450.3 L573.0,453.4 L581.7,456.4 L590.6,459.1 L599.6,461.5 L608.7,463.7 L618.0,465.7 L627.4,467.4 L636.8,468.8 L646.4,470.0 L656.0,471.0 L665.6,471.6 L675.3,472.0 L685.0,472.2 L694.7,472.0 L704.4,471.6 L714.0,471.0 L723.6,470.0 L733.2,468.8 L742.6,467.4 L752.0,465.7 L761.3,463.7 L770.4,461.5 L779.4,459.1 L788.3,456.4 L797.0,453.4 L805.5,450.3 L813.8,446.9 L822.0,443.3 L829.9,439.5 L837.6,435.5 L845.1,431.3 L852.3,426.9 L859.3,422.3 L866.0,417.5 L872.4,412.6 L878.6,407.5 L884.5,402.3 L890.1,397.0 L895.4,391.5 L900.3,385.9 L905.0,380.2 L909.4,374.3 L913.5,368.4 L917.2,362.4 L920.7,356.4 L923.8,350.2 L926.6,344.0 L929.0,337.8 L931.2,331.5 L933.0,325.2 L934.5,318.9 L935.7,312.5 L936.5,306.2 L937.1,299.8 L937.3,293.5 L937.2,287.2 L936.9,280.9 L936.2,274.7 M432.2,263.6 L431.5,269.9 L431.1,276.2 L431.0,282.5 L431.2,288.8 L431.8,295.2 L432.6,301.5 L433.8,307.9 L435.3,314.2 L437.2,320.5 L439.3,326.8 L441.8,333.0 L444.6,339.2 L447.7,345.4 L451.2,351.5 L454.9,357.5 L459.0,363.4 L463.4,369.2 L468.2,374.9 L473.2,380.6 L478.5,386.0 L484.1,391.4 L490.1,396.6 L496.3,401.7 L502.7,406.6 L509.5,411.4 L516.5,416.0 L523.8,420.4 L531.3,424.6 L539.1,428.6 L547.1,432.4 L555.2,436.1 L563.6,439.4 L572.2,442.6 L581.0,445.5 L589.9,448.2 L599.0,450.7 L608.2,452.9 L617.5,454.9 L627.0,456.6 L636.5,458.0 L646.1,459.2 L655.8,460.2 L665.5,460.8 L675.2,461.2 L685.0,461.4 L694.8,461.2 L704.5,460.8 L714.2,460.2 L723.9,459.2 L733.5,458.0 L743.0,456.6 L752.5,454.9 L761.8,452.9 L771.0,450.7 L780.1,448.2 L789.0,445.5 L797.8,442.6 L806.4,439.4 L814.8,436.1 L822.9,432.4 L830.9,428.6 L838.7,424.6 L846.2,420.4 L853.5,416.0 L860.5,411.4 L867.3,406.6 L873.7,401.7 L879.9,396.6 L885.9,391.4 L891.5,386.0 L896.8,380.6 L901.8,374.9 L906.6,369.2 L911.0,363.4 L915.1,357.5 L918.8,351.5 L922.3,345.4 L925.4,339.2 L928.2,333.0 L930.7,326.8 L932.8,320.5 L934.7,314.2 L936.2,307.9 L937.4,301.5 L938.2,295.2 L938.8,288.8 L939.0,282.5 L938.9,276.2 L938.5,269.9 L937.8,263.6 M430.5,252.4 L429.8,258.7 L429.4,265.0 L429.3,271.3 L429.5,277.6 L430.1,284.0 L430.9,290.3 L432.1,296.7 L433.6,303.0 L435.5,309.4 L437.6,315.7 L440.1,321.9 L442.9,328.1 L446.1,334.3 L449.6,340.3 L453.3,346.4 L457.5,352.3 L461.9,358.1 L466.6,363.8 L471.7,369.5 L477.1,375.0 L482.7,380.3 L488.7,385.6 L494.9,390.7 L501.5,395.6 L508.3,400.4 L515.3,405.0 L522.6,409.4 L530.2,413.6 L538.0,417.6 L546.1,421.4 L554.3,425.1 L562.8,428.5 L571.4,431.6 L580.2,434.6 L589.2,437.3 L598.3,439.7 L607.6,441.9 L617.0,443.9 L626.5,445.6 L636.1,447.1 L645.8,448.3 L655.6,449.2 L665.3,449.9 L675.2,450.3 L685.0,450.4 L694.8,450.3 L704.7,449.9 L714.4,449.2 L724.2,448.3 L733.9,447.1 L743.5,445.6 L753.0,443.9 L762.4,441.9 L771.7,439.7 L780.8,437.3 L789.8,434.6 L798.6,431.6 L807.2,428.5 L815.7,425.1 L823.9,421.4 L832.0,417.6 L839.8,413.6 L847.4,409.4 L854.7,405.0 L861.7,400.4 L868.5,395.6 L875.1,390.7 L881.3,385.6 L887.3,380.3 L892.9,375.0 L898.3,369.5 L903.4,363.8 L908.1,358.1 L912.5,352.3 L916.7,346.4 L920.4,340.3 L923.9,334.3 L927.1,328.1 L929.9,321.9 L932.4,315.7 L934.5,309.4 L936.4,303.0 L937.9,296.7 L939.1,290.3 L939.9,284.0 L940.5,277.6 L940.7,271.3 L940.6,265.0 L940.2,258.7 L939.5,252.4 M428.8,241.1 L428.1,247.3 L427.7,253.6 L427.6,260.0 L427.8,266.3 L428.3,272.7 L429.2,279.0 L430.4,285.4 L431.9,291.7 L433.8,298.1 L435.9,304.4 L438.4,310.6 L441.3,316.8 L444.4,323.0 L447.9,329.1 L451.7,335.1 L455.9,341.0 L460.3,346.9 L465.1,352.6 L470.2,358.2 L475.6,363.7 L481.3,369.1 L487.3,374.4 L493.6,379.4 L500.1,384.4 L507.0,389.2 L514.1,393.8 L521.5,398.2 L529.1,402.4 L537.0,406.4 L545.0,410.3 L553.4,413.9 L561.9,417.3 L570.6,420.5 L579.5,423.4 L588.5,426.1 L597.7,428.6 L607.1,430.8 L616.5,432.8 L626.1,434.5 L635.8,436.0 L645.5,437.2 L655.3,438.1 L665.2,438.8 L675.1,439.2 L685.0,439.3 L694.9,439.2 L704.8,438.8 L714.7,438.1 L724.5,437.2 L734.2,436.0 L743.9,434.5 L753.5,432.8 L762.9,430.8 L772.3,428.6 L781.5,426.1 L790.5,423.4 L799.4,420.5 L808.1,417.3 L816.6,413.9 L825.0,410.3 L833.0,406.4 L840.9,402.4 L848.5,398.2 L855.9,393.8 L863.0,389.2 L869.9,384.4 L876.4,379.4 L882.7,374.4 L888.7,369.1 L894.4,363.7 L899.8,358.2 L904.9,352.6 L909.7,346.9 L914.1,341.0 L918.3,335.1 L922.1,329.1 L925.6,323.0 L928.7,316.8 L931.6,310.6 L934.1,304.4 L936.2,298.1 L938.1,291.7 L939.6,285.4 L940.8,279.0 L941.7,272.7 L942.2,266.3 L942.4,260.0 L942.3,253.6 L941.9,247.3 L941.2,241.1 M427.1,229.6 L426.4,235.8 L426.0,242.1 L425.8,248.5 L426.1,254.8 L426.6,261.2 L427.5,267.5 L428.7,273.9 L430.2,280.3 L432.0,286.6 L434.2,292.9 L436.7,299.2 L439.6,305.4 L442.7,311.5 L446.2,317.6 L450.1,323.7 L454.2,329.6 L458.7,335.4 L463.5,341.2 L468.6,346.8 L474.1,352.3 L479.8,357.7 L485.9,363.0 L492.2,368.1 L498.8,373.0 L505.7,377.8 L512.9,382.4 L520.3,386.8 L528.0,391.1 L535.9,395.1 L544.0,398.9 L552.4,402.6 L561.0,406.0 L569.7,409.2 L578.7,412.1 L587.8,414.8 L597.1,417.3 L606.5,419.5 L616.0,421.5 L625.7,423.2 L635.4,424.7 L645.2,425.9 L655.1,426.8 L665.0,427.5 L675.0,427.9 L685.0,428.0 L695.0,427.9 L705.0,427.5 L714.9,426.8 L724.8,425.9 L734.6,424.7 L744.3,423.2 L754.0,421.5 L763.5,419.5 L772.9,417.3 L782.2,414.8 L791.3,412.1 L800.3,409.2 L809.0,406.0 L817.6,402.6 L826.0,398.9 L834.1,395.1 L842.0,391.1 L849.7,386.8 L857.1,382.4 L864.3,377.8 L871.2,373.0 L877.8,368.1 L884.1,363.0 L890.2,357.7 L895.9,352.3 L901.4,346.8 L906.5,341.2 L911.3,335.4 L915.8,329.6 L919.9,323.7 L923.8,317.6 L927.3,311.5 L930.4,305.4 L933.3,299.2 L935.8,292.9 L938.0,286.6 L939.8,280.3 L941.3,273.9 L942.5,267.5 L943.4,261.2 L943.9,254.8 L944.2,248.5 L944.0,242.1 L943.6,235.8 L942.9,229.6 M425.4,217.9 L424.6,224.2 L424.2,230.5 L424.1,236.8 L424.3,243.2 L424.8,249.5 L425.7,255.9 L426.9,262.3 L428.4,268.6 L430.3,275.0 L432.5,281.3 L435.0,287.5 L437.8,293.8 L441.0,299.9 L444.6,306.0 L448.4,312.1 L452.6,318.0 L457.1,323.9 L461.9,329.6 L467.1,335.3 L472.6,340.8 L478.3,346.2 L484.4,351.4 L490.8,356.5 L497.4,361.5 L504.4,366.3 L511.6,370.9 L519.1,375.3 L526.8,379.6 L534.8,383.6 L543.0,387.4 L551.4,391.1 L560.0,394.5 L568.9,397.7 L577.9,400.6 L587.1,403.4 L596.4,405.8 L605.9,408.1 L615.5,410.0 L625.2,411.8 L635.0,413.2 L644.9,414.4 L654.9,415.4 L664.9,416.0 L674.9,416.4 L685.0,416.6 L695.1,416.4 L705.1,416.0 L715.1,415.4 L725.1,414.4 L735.0,413.2 L744.8,411.8 L754.5,410.0 L764.1,408.1 L773.6,405.8 L782.9,403.4 L792.1,400.6 L801.1,397.7 L810.0,394.5 L818.6,391.1 L827.0,387.4 L835.2,383.6 L843.2,379.6 L850.9,375.3 L858.4,370.9 L865.6,366.3 L872.6,361.5 L879.2,356.5 L885.6,351.4 L891.7,346.2 L897.4,340.8 L902.9,335.3 L908.1,329.6 L912.9,323.9 L917.4,318.0 L921.6,312.1 L925.4,306.0 L929.0,299.9 L932.2,293.8 L935.0,287.5 L937.5,281.3 L939.7,275.0 L941.6,268.6 L943.1,262.3 L944.3,255.9 L945.2,249.5 L945.7,243.2 L945.9,236.8 L945.8,230.5 L945.4,224.2 L944.6,217.9 M423.6,206.1 L422.8,212.4 L422.4,218.7 L422.3,225.0 L422.5,231.4 L423.0,237.7 L423.9,244.1 L425.1,250.5 L426.6,256.8 L428.5,263.2 L430.7,269.5 L433.2,275.8 L436.1,282.0 L439.3,288.2 L442.8,294.3 L446.7,300.3 L450.9,306.3 L455.5,312.1 L460.3,317.9 L465.5,323.5 L471.0,329.0 L476.8,334.4 L482.9,339.7 L489.4,344.8 L496.1,349.8 L503.1,354.6 L510.3,359.2 L517.9,363.6 L525.6,367.9 L533.7,371.9 L541.9,375.8 L550.4,379.4 L559.1,382.8 L568.0,386.0 L577.1,389.0 L586.3,391.7 L595.7,394.2 L605.3,396.4 L615.0,398.4 L624.8,400.1 L634.7,401.6 L644.6,402.8 L654.7,403.7 L664.7,404.4 L674.9,404.8 L685.0,404.9 L695.1,404.8 L705.3,404.4 L715.3,403.7 L725.4,402.8 L735.3,401.6 L745.2,400.1 L755.0,398.4 L764.7,396.4 L774.3,394.2 L783.7,391.7 L792.9,389.0 L802.0,386.0 L810.9,382.8 L819.6,379.4 L828.1,375.8 L836.3,371.9 L844.4,367.9 L852.1,363.6 L859.7,359.2 L866.9,354.6 L873.9,349.8 L880.6,344.8 L887.1,339.7 L893.2,334.4 L899.0,329.0 L904.5,323.5 L909.7,317.9 L914.5,312.1 L919.1,306.3 L923.3,300.3 L927.2,294.3 L930.7,288.2 L933.9,282.0 L936.8,275.8 L939.3,269.5 L941.5,263.2 L943.4,256.8 L944.9,250.5 L946.1,244.1 L947.0,237.7 L947.5,231.4 L947.7,225.0 L947.6,218.7 L947.2,212.4 L946.4,206.1 M421.8,194.2 L421.1,200.4 L420.6,206.7 L420.5,213.1 L420.7,219.4 L421.2,225.8 L422.1,232.2 L423.3,238.5 L424.8,244.9 L426.7,251.2 L428.9,257.5 L431.4,263.8 L434.3,270.1 L437.5,276.2 L441.1,282.3 L445.0,288.4 L449.2,294.3 L453.8,300.2 L458.7,306.0 L463.9,311.6 L469.5,317.1 L475.3,322.6 L481.5,327.8 L487.9,332.9 L494.7,337.9 L501.7,342.7 L509.0,347.3 L516.6,351.8 L524.4,356.0 L532.5,360.1 L540.9,363.9 L549.4,367.6 L558.2,371.0 L567.1,374.2 L576.3,377.2 L585.6,379.9 L595.1,382.4 L604.7,384.6 L614.4,386.6 L624.3,388.3 L634.3,389.8 L644.3,391.0 L654.4,391.9 L664.6,392.6 L674.8,393.0 L685.0,393.1 L695.2,393.0 L705.4,392.6 L715.6,391.9 L725.7,391.0 L735.7,389.8 L745.7,388.3 L755.6,386.6 L765.3,384.6 L774.9,382.4 L784.4,379.9 L793.7,377.2 L802.9,374.2 L811.8,371.0 L820.6,367.6 L829.1,363.9 L837.5,360.1 L845.6,356.0 L853.4,351.8 L861.0,347.3 L868.3,342.7 L875.3,337.9 L882.1,332.9 L888.5,327.8 L894.7,322.6 L900.5,317.1 L906.1,311.6 L911.3,306.0 L916.2,300.2 L920.8,294.3 L925.0,288.4 L928.9,282.3 L932.5,276.2 L935.7,270.1 L938.6,263.8 L941.1,257.5 L943.3,251.2 L945.2,244.9 L946.7,238.5 L947.9,232.2 L948.8,225.8 L949.3,219.4 L949.5,213.1 L949.4,206.7 L948.9,200.4 L948.2,194.2 M420.0,182.0 L419.2,188.3 L418.8,194.6 L418.6,200.9 L418.8,207.3 L419.4,213.7 L420.2,220.0 L421.4,226.4 L423.0,232.8 L424.8,239.1 L427.1,245.4 L429.6,251.7 L432.5,257.9 L435.8,264.1 L439.3,270.2 L443.3,276.3 L447.5,282.2 L452.1,288.1 L457.1,293.9 L462.3,299.5 L467.9,305.1 L473.8,310.5 L480.0,315.8 L486.5,320.9 L493.3,325.8 L500.3,330.7 L507.7,335.3 L515.3,339.7 L523.2,344.0 L531.4,348.1 L539.8,351.9 L548.4,355.6 L557.2,359.0 L566.2,362.2 L575.4,365.2 L584.8,367.9 L594.4,370.4 L604.1,372.6 L613.9,374.6 L623.8,376.3 L633.9,377.8 L644.0,379.0 L654.2,380.0 L664.4,380.6 L674.7,381.0 L685.0,381.2 L695.3,381.0 L705.6,380.6 L715.8,380.0 L726.0,379.0 L736.1,377.8 L746.2,376.3 L756.1,374.6 L765.9,372.6 L775.6,370.4 L785.2,367.9 L794.6,365.2 L803.8,362.2 L812.8,359.0 L821.6,355.6 L830.2,351.9 L838.6,348.1 L846.8,344.0 L854.7,339.7 L862.3,335.3 L869.7,330.7 L876.7,325.8 L883.5,320.9 L890.0,315.8 L896.2,310.5 L902.1,305.1 L907.7,299.5 L912.9,293.9 L917.9,288.1 L922.5,282.2 L926.7,276.3 L930.7,270.2 L934.2,264.1 L937.5,257.9 L940.4,251.7 L942.9,245.4 L945.2,239.1 L947.0,232.8 L948.6,226.4 L949.8,220.0 L950.6,213.7 L951.2,207.3 L951.4,200.9 L951.2,194.6 L950.8,188.3 L950.0,182.0 M418.2,169.7 L417.4,176.0 L416.9,182.3 L416.8,188.6 L417.0,195.0 L417.5,201.4 L418.4,207.7 L419.6,214.1 L421.1,220.5 L423.0,226.8 L425.2,233.1 L427.8,239.4 L430.7,245.7 L434.0,251.8 L437.6,258.0 L441.5,264.0 L445.8,270.0 L450.4,275.8 L455.4,281.6 L460.7,287.3 L466.3,292.8 L472.2,298.2 L478.4,303.5 L485.0,308.6 L491.8,313.6 L499.0,318.4 L506.4,323.1 L514.1,327.5 L522.0,331.8 L530.2,335.9 L538.7,339.7 L547.3,343.4 L556.2,346.8 L565.3,350.0 L574.6,353.0 L584.1,355.7 L593.7,358.2 L603.5,360.4 L613.4,362.4 L623.4,364.2 L633.5,365.6 L643.7,366.8 L654.0,367.8 L664.3,368.5 L674.6,368.9 L685.0,369.0 L695.4,368.9 L705.7,368.5 L716.0,367.8 L726.3,366.8 L736.5,365.6 L746.6,364.2 L756.6,362.4 L766.5,360.4 L776.3,358.2 L785.9,355.7 L795.4,353.0 L804.7,350.0 L813.8,346.8 L822.7,343.4 L831.3,339.7 L839.8,335.9 L848.0,331.8 L855.9,327.5 L863.6,323.1 L871.0,318.4 L878.2,313.6 L885.0,308.6 L891.6,303.5 L897.8,298.2 L903.7,292.8 L909.3,287.3 L914.6,281.6 L919.6,275.8 L924.2,270.0 L928.5,264.0 L932.4,258.0 L936.0,251.8 L939.3,245.7 L942.2,239.4 L944.8,233.1 L947.0,226.8 L948.9,220.5 L950.4,214.1 L951.6,207.7 L952.5,201.4 L953.0,195.0 L953.2,188.6 L953.1,182.3 L952.6,176.0 L951.8,169.7 M692.5,683.5 L694.3,368.9 M707.4,682.7 L712.9,368.0 M722.2,681.1 L731.4,366.3 M736.9,678.6 L749.6,363.7 M751.2,675.4 L767.5,360.2 M765.3,671.4 L785.0,356.0 M778.9,666.7 L801.9,350.9 M792.1,661.3 L818.2,345.1 M804.8,655.2 L833.9,338.6 M816.9,648.4 L848.8,331.4 M828.3,641.1 L862.9,323.5 M839.1,633.1 L876.1,315.1 M849.1,624.7 L888.3,306.1 M858.4,615.7 L899.6,296.6 M866.9,606.3 L909.9,286.7 M874.5,596.6 L919.1,276.4 M881.3,586.5 L927.2,265.8 M887.3,576.1 L934.3,254.9 M892.3,565.5 L940.2,243.8 M896.5,554.7 L945.0,232.5 M899.7,543.8 L948.7,221.1 M902.1,532.8 L951.3,209.6 M903.6,521.7 L952.8,198.2 M904.2,510.7 L953.2,186.7 M903.9,499.7 L952.6,175.4 M466.1,499.7 L417.4,175.4 M465.8,510.7 L416.8,186.7 M466.4,521.7 L417.2,198.2 M467.9,532.8 L418.7,209.6 M470.3,543.8 L421.3,221.1 M473.5,554.7 L425.0,232.5 M477.7,565.5 L429.8,243.8 M482.7,576.1 L435.7,254.9 M488.7,586.5 L442.8,265.8 M495.5,596.6 L450.9,276.4 M503.1,606.3 L460.1,286.7 M511.6,615.7 L470.4,296.6 M520.9,624.7 L481.7,306.1 M530.9,633.1 L493.9,315.1 M541.7,641.1 L507.1,323.5 M553.1,648.4 L521.2,331.4 M565.2,655.2 L536.1,338.6 M577.9,661.3 L551.8,345.1 M591.1,666.7 L568.1,350.9 M604.7,671.4 L585.0,356.0 M618.8,675.4 L602.5,360.2 M633.1,678.6 L620.4,363.7 M647.8,681.1 L638.6,366.3 M662.6,682.7 L657.1,368.0 M677.5,683.5 L675.7,368.9" fill="none" stroke="#7b7b7b" stroke-width="1" shape-rendering="crispEdges"/>
<path d="M780.0,191.7 L775.5,192.6 L769.2,193.9 L761.8,195.4 L754.0,197.1 L746.5,198.6 L740.0,200.0 L734.3,201.2 L728.7,202.2 L723.5,203.2 L718.7,204.2 L714.3,205.3 L710.5,206.4 L707.4,207.6 L705.0,208.9 L703.0,210.1 L701.4,211.5 L699.8,213.0 L698.3,214.6 L696.7,216.4 L695.3,218.4 L693.9,220.5 L692.8,222.7 L691.8,224.7 L691.0,226.7 L690.4,228.5 L690.0,230.2 L689.8,231.8 L689.7,233.5 L689.8,235.2 L690.0,237.0 L690.3,239.0 L690.8,241.0 L691.4,243.2 L692.2,245.3 L693.0,247.3 L694.0,249.2 L695.1,251.0 L696.5,252.8 L697.9,254.6 L699.4,256.1 L700.9,257.4 L702.3,258.4 L703.8,258.9 L705.3,259.1 L706.9,259.0 L708.4,258.7 L709.6,258.5 L710.5,258.4 M710.5,258.4 L709.2,258.9 L707.6,259.6 L705.7,260.4 L703.1,261.4 L699.7,262.9 L695.4,264.8 L690.1,267.2 L683.8,270.0 L676.8,273.2 L669.1,276.8 L660.8,280.6 L652.0,284.7 L642.4,289.3 L631.9,294.6 L620.7,300.1 L609.3,305.6 L597.9,310.9 L586.8,315.5 L575.3,319.7 L562.9,323.7 L550.5,327.4 L539.1,330.6 L529.4,333.4 L522.4,335.4 M780.0,191.7 L783.5,190.6 L788.7,189.0 L794.6,187.1 L800.7,185.1 L806.1,183.3 L810.0,181.7 L812.4,180.5 L813.7,179.5 L814.4,178.6 L814.7,177.7 L815.0,176.7 L815.6,175.6 L816.5,174.4 L817.3,173.4 L818.2,172.2 L818.9,170.8 L819.5,169.1 L820.0,166.7 L820.4,163.7 L820.8,160.1 L821.1,156.1 L821.1,151.9 L820.8,147.6 L820.0,143.3 L818.6,139.1 L816.8,134.8 L814.6,130.4 L812.1,125.9 L809.5,121.4 L806.7,116.7 L803.8,111.9 L800.8,106.8 L797.5,101.7 L794.1,96.6 L790.5,91.5 L786.7,86.7 L782.7,82.0 L778.4,77.5 L774.0,73.0 L769.4,68.7 L764.7,64.3 L760.0,60.0 L755.2,55.6 L750.1,51.2 L745.0,46.8 L739.9,42.6 L734.8,38.6 L730.0,35.0 L725.3,31.7 L720.6,28.7 L716.0,25.9 L711.6,23.4 L707.3,21.2 L703.3,19.3 L699.6,17.7 L696.1,16.4 L692.9,15.5 L689.7,14.8 L686.6,14.4 L683.3,14.3 L679.9,14.5 L676.3,15.1 L672.8,16.0 L669.3,17.1 L666.1,18.5 L663.3,20.0 L660.8,21.7 L658.6,23.6 L656.6,25.8 L654.8,28.1 L653.2,30.6 L651.7,33.3 L650.4,36.2 L649.2,39.5 L648.2,42.9 L647.3,46.4 L646.6,49.9 L646.0,53.3 L645.5,56.6 L645.2,59.7 L644.9,62.9 L644.8,66.1 L644.9,69.6 L645.0,73.3 L645.2,77.4 L645.6,81.8 L646.1,86.4 L646.7,91.1 L647.4,95.7 L648.3,100.0 L649.3,104.0 L650.5,107.9 L651.9,111.6 L653.3,115.4 L655.0,119.3 L656.7,123.3 L658.6,127.6 L660.5,131.9 L662.6,136.4 L664.9,141.0 L667.3,145.5 L670.0,150.0 L672.9,154.5 L676.0,158.9 L679.4,163.4 L682.8,167.8 L686.4,172.3 L690.0,176.7 L693.7,181.3 L697.5,185.9 L701.4,190.6 L705.4,195.2 L709.4,199.4 L713.3,203.3 L717.2,206.7 L721.0,209.8 L724.8,212.6 L728.7,215.2 L732.6,217.6 L736.7,220.0 L740.9,222.3 L745.3,224.6 L749.8,226.7 L754.3,228.6 L758.8,230.3 L763.3,231.7 L767.7,232.9 L772.1,233.8 L776.4,234.5 L780.9,235.0 L785.4,235.1 L790.0,235.0 L794.9,234.5 L800.0,233.5 L805.2,232.3 L810.4,230.9 L815.3,229.5 L820.0,228.3 L824.4,227.2 L828.6,226.0 L832.6,224.8 L836.4,223.6 L840.0,222.6 L843.3,221.7 L846.1,220.9 L848.5,220.1 L850.6,219.4 L852.7,218.9 L855.0,218.7 L857.8,218.7 L861.1,219.0 L864.9,219.6 L868.8,220.4 L872.8,221.4 L876.6,222.8 L880.0,224.4 L883.0,226.6 L885.9,229.4 L888.5,232.6 L891.0,235.6 L893.3,238.2 L895.6,240.0 L897.7,241.1 L899.7,241.6 L901.6,241.8 L903.3,241.6 L905.0,241.0 L906.7,240.0 L908.4,238.7 L910.0,237.1 L911.6,235.2 L913.1,232.8 L914.5,230.0 L915.6,226.7 L916.6,222.8 L917.5,218.3 L918.3,213.4 L918.8,208.2 L919.1,202.9 L919.1,197.8 L918.8,192.7 L918.1,187.5 L917.2,182.2 L916.1,177.0 L914.8,171.8 L913.3,166.7 L911.6,161.7 L909.8,156.8 L907.7,152.0 L905.4,147.2 L902.8,142.5 L900.0,137.8 L897.0,133.1 L893.8,128.2 L890.3,123.5 L886.5,118.9 L882.4,114.7 L877.8,111.1 L872.4,107.9 L866.2,105.0 L859.6,102.5 L853.1,100.4 L847.1,98.8 L842.2,97.8 L838.5,97.4 L835.6,97.5 L833.3,98.2 L831.3,99.2 L829.2,100.6 L826.7,102.2 L823.8,104.2 L820.6,106.8 L817.4,109.6 L814.3,112.6 L811.4,115.4 L808.9,117.8 L807.1,119.7 L805.9,121.3 L805.0,122.7 L804.0,124.2 L802.4,126.0 L800.0,128.3 L796.5,131.3 L792.2,134.8 L787.3,138.6 L782.4,142.5 L777.6,146.4 L773.3,150.0 L769.5,153.4 L765.8,156.8 L762.4,160.1 L759.1,163.4 L756.1,166.7 L753.3,170.0 L750.8,173.3 L748.5,176.7 L746.5,180.0 L744.6,183.3 L743.1,186.7 L741.7,190.0 L740.6,193.3 L739.8,196.5 L739.2,199.8 L738.8,203.1 L738.5,206.5 L738.3,210.0 L738.3,213.9 L738.5,218.1 L738.8,222.5 L739.2,226.6 L739.7,230.3 L740.0,233.3 L740.2,235.1 L740.2,235.9 L740.2,236.2 L740.4,236.7 L740.8,237.7 L741.7,240.0 L743.0,243.7 L744.6,248.3 L746.6,253.5 L748.7,259.1 L751.0,264.7 L753.3,270.0 L755.7,275.0 L758.4,280.1 L761.1,285.2 L764.0,290.2 L767.0,295.2 L770.0,300.0 L773.1,304.6 L776.3,309.1 L779.6,313.6 L783.0,317.9 L786.4,322.3 L790.0,326.7 L793.7,331.2 L797.4,335.6 L801.2,340.1 L805.2,344.6 L809.2,349.0 L813.3,353.3 L817.6,357.7 L822.2,362.3 L826.8,366.9 L831.4,371.2 L835.8,375.0 L840.0,378.2 L843.8,380.6 L847.5,382.3 L850.9,383.6 L854.3,384.7 L857.6,385.5 L860.9,386.5 L864.3,387.4 L867.6,388.1 L871.0,388.7 L874.1,389.3 L877.1,389.9 L879.7,390.7 L881.9,391.7 L883.9,392.9 L885.6,394.1 L887.1,395.3 L888.6,396.3 L890.1,397.0 L891.6,397.4 L893.1,397.7 L894.4,397.8 L895.8,397.7 L897.1,397.4 L898.5,397.0 L900.0,396.4 L901.5,395.5 L903.0,394.5 L904.5,393.3 L905.8,392.1 L906.8,390.7 L907.5,389.1 L908.0,387.2 L908.4,385.1 L908.6,383.1 L908.7,381.5 L908.9,380.3 M900.5,376.1 L901.0,375.7 L901.6,375.2 L902.3,374.5 L903.1,373.8 L904.0,372.9 L904.7,371.9 L905.5,370.8 L906.3,369.6 L907.1,368.3 L907.9,366.8 L908.5,365.3 L908.9,363.6 L909.0,361.7 L909.0,359.6 L908.8,357.3 L908.5,355.0 L908.2,352.9 L907.8,351.0 L907.5,349.3 L907.3,347.8 L907.1,346.5 L906.7,345.2 L905.9,343.9 L904.7,342.7 L902.9,341.6 L900.5,340.6 L897.9,339.7 L895.1,338.7 L892.4,337.7 L890.1,336.4 L888.1,335.0 L886.3,333.4 L884.6,331.7 L883.0,329.9 L881.4,328.0 L879.7,326.0 L877.9,323.8 L876.1,321.4 L874.3,319.0 L872.5,316.4 L870.8,313.9 L869.2,311.4 L867.6,309.0 L866.1,306.5 L864.7,304.1 L863.3,301.7 L862.0,299.2 L860.9,296.8 L859.9,294.3 L859.1,291.8 L858.3,289.3 L857.7,286.8 L857.2,284.4 L856.7,282.1 L856.3,279.8 L856.0,277.4 L855.8,275.1 L855.7,272.9 L855.7,271.1 L855.7,269.6 L855.8,268.6 L855.9,267.8 L856.2,267.4 L856.5,267.2 L857.0,267.2 L857.7,267.5 L858.6,268.0 L859.6,268.7 L860.8,269.7 L862.1,270.9 L863.5,272.3 L865.0,273.8 L866.5,275.5 L868.2,277.3 L869.9,279.3 L871.7,281.4 L873.6,283.8 L875.5,286.3 L877.5,289.1 L879.7,292.3 L881.9,295.6 L884.1,298.9 L886.1,302.1 L888.0,305.1 L889.7,307.8 L891.3,310.4 L892.7,312.9 L894.1,315.3 L895.3,317.6 L896.4,319.7 L897.4,321.7 L898.2,323.6 L898.8,325.3 L899.4,327.0 L900.0,328.6 L900.5,330.2 L900.9,331.8 L901.2,333.4 L901.4,335.0 L901.7,336.4 L902.0,337.6 L902.6,338.5 L903.4,339.1 L904.4,339.4 L905.5,339.5 L906.6,339.4 L907.8,339.1 L908.9,338.5 L910.0,337.6 L911.1,336.5 L912.2,335.1 L913.3,333.6 L914.3,331.9 L915.2,330.2 L915.9,328.4 L916.6,326.6 L917.1,324.7 L917.6,322.6 L918.0,320.2 L918.3,317.6 L918.5,314.5 L918.6,311.1 L918.6,307.4 L918.6,303.7 L918.5,300.1 L918.3,296.8 L918.0,293.7 L917.7,290.6 L917.2,287.7 L916.8,285.0 L916.5,282.7 L916.2,281.1 M873.4,374.0 L873.9,375.5 L874.7,377.5 L875.6,379.9 L876.5,382.6 L877.5,385.8 L878.4,389.2 L879.3,393.0 L880.3,397.3 L881.3,402.0 L882.2,406.9 L883.2,411.9 L884.0,417.0 L884.7,422.0 L885.3,427.1 L885.8,432.3 L886.4,437.8 L887.1,443.6 L888.0,450.0 L889.2,457.3 L890.8,465.5 L892.4,474.2 L894.1,482.6 L895.5,490.3 L896.7,496.7 L897.5,501.8 L898.1,506.1 L898.5,509.6 L898.9,512.5 L899.1,514.8 L899.3,516.7 M522.4,169.7 L525.1,169.1 L528.9,168.2 L533.3,167.1 L538.1,166.1 L542.8,165.2 L547.0,164.6 L550.7,164.2 L554.3,163.9 L557.8,163.8 L561.3,163.8 L564.9,164.1 L568.7,164.6 L572.8,165.4 L577.3,166.3 L581.8,167.5 L586.2,168.9 L590.4,170.6 L594.0,172.6 L597.1,175.0 L600.0,177.8 L602.5,180.8 L604.7,184.0 L606.7,187.4 L608.5,190.7 L610.0,194.0 L611.2,197.4 L612.2,200.9 L613.0,204.5 L613.6,208.3 L614.0,212.4 L614.3,216.8 L614.4,221.4 L614.3,226.2 L614.0,231.1 L613.6,236.2 L612.9,241.3 L612.0,246.5 L610.9,251.9 L609.7,257.4 L608.2,262.9 L606.7,268.4 L605.0,273.9 L603.2,279.3 L601.3,284.7 L599.2,290.1 L597.0,295.6 L594.7,301.0 L592.3,306.4 L589.9,311.9 L587.3,317.4 L584.7,322.9 L582.0,328.4 L579.1,333.8 L576.0,339.0 L572.8,344.2 L569.5,349.3 L566.1,354.4 L562.5,359.3 L558.6,363.8 L554.3,368.0 L549.2,371.8 L543.2,375.5 L537.0,378.8 L531.0,381.7 L526.0,384.2 L522.4,386.0 M522.4,185.2 L524.7,183.4 L527.9,180.9 L531.7,177.9 L535.7,174.7 L539.7,171.7 L543.4,169.0 L547.0,166.5 L550.9,164.0 L554.7,161.6 L558.2,159.5 L561.1,157.6 L563.3,156.3 M703.0,542.3 L707.7,541.8 L714.3,541.1 L722.0,540.3 L730.3,539.4 L738.3,538.5 L745.5,537.6 L751.8,536.7 L757.8,535.7 L763.7,534.6 L769.4,533.6 L775.2,532.6 L781.0,531.7 L787.0,530.8 L793.2,530.0 L799.4,529.1 L805.5,528.4 L811.3,527.8 L816.7,527.3 L821.9,527.0 L826.9,526.8 L831.7,526.7 L836.1,526.8 L840.0,527.0 L843.3,527.3 L846.0,527.7 L848.2,528.2 L849.9,528.8 L851.1,529.5 L851.7,530.5 L851.7,531.7 L851.1,533.2 L849.8,535.0 L848.0,536.9 L845.8,539.0 L843.1,541.2 L840.0,543.3 L836.4,545.4 L832.2,547.7 L827.5,549.9 L822.7,552.2 L817.8,554.5 L813.3,556.7 L809.0,559.0 L804.7,561.4 L800.5,563.7 L796.3,565.9 L792.1,567.9 L788.0,569.5 L783.9,570.7 L779.8,571.6 L775.8,572.3 L771.9,572.7 L768.0,572.9 L764.4,573.0 L760.8,572.9 L757.3,572.6 L753.9,572.1 L750.8,571.4 L747.9,570.5 L745.5,569.5 L743.5,568.2 L741.9,566.7 L740.6,565.0 L739.6,563.2 L738.7,561.5 L738.0,560.0 L737.4,558.8 L736.9,557.9 L736.6,557.1 L736.5,556.1 L736.6,554.8 L736.9,553.0 L737.4,550.6 L738.0,547.8 L738.8,544.7 L739.9,541.3 L741.3,537.7 L743.0,534.0 L745.0,530.1 L747.4,526.0 L750.0,521.7 L752.9,517.3 L756.1,512.7 L759.7,508.0 L763.8,503.0 L768.5,497.6 L773.5,492.1 L778.6,486.7 L783.5,481.7 L788.0,477.3 L791.9,473.6 L795.5,470.3 L798.9,467.5 L802.3,464.9 L805.9,462.4 L810.0,460.0 L814.7,457.6 L820.1,455.2 L825.6,453.0 L831.1,451.0 L836.0,449.4 L840.0,448.3 L843.1,447.7 L845.5,447.4 L847.4,447.6 L849.0,448.1 L850.3,448.9 L851.7,450.0 L853.0,451.4 L854.1,453.0 L855.0,454.9 L855.8,457.2 L856.3,460.0 L856.7,463.3 L856.9,467.3 L856.9,471.9 L856.7,477.0 L856.3,482.4 L855.7,487.9 L855.0,493.3 L854.0,498.7 L852.7,504.4 L851.3,510.2 L849.7,515.9 L848.2,521.5 L846.7,526.7 L845.3,531.4 L844.0,535.8 L842.7,540.0 L841.3,544.2 L839.9,548.6 L838.3,553.3 L836.5,558.5 L834.5,563.9 L832.4,569.6 L830.3,575.3 L828.4,581.1 L826.7,586.7 L825.2,592.4 L823.8,598.2 L822.5,604.1 L821.4,609.8 L820.6,615.1 L820.0,620.0 L819.7,624.5 L819.8,628.7 L820.0,632.7 L820.5,636.2 L821.0,639.2 L821.7,641.7 L822.4,643.5 L823.2,644.8 L824.2,645.6 L825.3,646.0 L826.7,646.1 L828.3,646.0 L830.2,645.8 L832.4,645.4 L834.7,644.7 L837.4,643.7 L840.2,642.1 L843.3,640.0 L846.7,637.3 L850.6,634.0 L854.6,630.3 L858.7,626.1 L862.8,621.6 L866.7,616.7 L870.4,611.4 L874.1,605.4 L877.8,599.1 L881.3,592.7 L884.7,586.2 L888.0,580.0 L891.1,573.9 L894.2,567.9 L897.1,561.8 L899.8,555.8 L902.3,549.9 L904.6,544.0 L906.5,538.4 L908.1,533.0 L909.5,527.7 L910.8,522.2 L912.1,516.4 L913.5,510.0 L915.1,502.8 L916.9,494.9 L918.6,486.6 L920.3,478.3 L921.9,470.4 L923.3,463.3 L924.6,456.6 L925.7,450.0 L926.8,443.8 L927.7,438.2 L928.4,433.7 L928.8,430.5 L929.0,428.5 L929.0,427.5 L928.7,427.5 L928.3,428.6 L927.6,430.7 L926.7,434.0 L925.5,439.0 L923.9,445.7 L922.1,453.5 L920.2,461.7 L918.4,469.7 L916.7,476.7 L915.2,483.0 L913.7,489.1 L912.2,494.9 L910.8,500.4 L909.5,505.4 L908.3,510.0 L907.2,514.0 L906.2,517.5 L905.2,520.6 L904.4,523.4 L903.6,525.8 L903.0,528.0 L902.5,529.9 L902.1,531.4 L901.9,532.6 L901.7,533.6 L901.5,534.4 L901.4,535.0 M693.5,544.2 L688.8,544.5 L682.3,545.0 L674.6,545.6 L666.4,546.2 L658.3,546.7 L651.0,547.0 L644.2,547.2 L637.3,547.4 L630.6,547.5 L624.2,547.5 L618.3,547.3 L613.1,547.0 L608.7,546.6 L605.0,546.0 L601.7,545.3 L598.9,544.5 L596.4,543.5 L594.2,542.3 L592.2,540.9 L590.6,539.3 L589.3,537.6 L588.3,535.7 L587.6,533.7 L587.1,531.7 L586.8,529.6 L586.6,527.5 L586.7,525.2 L587.1,522.8 L588.0,520.2 L589.5,517.5 L591.6,514.5 L594.1,511.2 L597.2,507.8 L600.6,504.3 L604.4,500.8 L608.4,497.4 L612.8,494.0 L617.6,490.6 L622.7,487.1 L628.1,483.7 L633.6,480.4 L639.1,477.3 L644.7,474.2 L650.5,471.2 L656.4,468.3 L662.4,465.5 L668.5,462.9 L674.6,460.7 L680.8,458.8 L687.2,457.1 L693.6,455.7 L700.1,454.4 L706.3,453.4 L712.4,452.5 L718.2,451.8 L723.9,451.3 L729.4,451.0 L734.8,450.9 L740.2,450.8 L745.5,450.8 L750.8,450.8 L756.1,450.9 L761.3,451.0 L766.5,451.3 L771.5,451.8 L776.3,452.5 L781.1,453.5 L786.0,454.7 L790.7,456.1 L795.2,457.6 L799.1,459.2 L802.3,460.7 L804.7,462.1 L806.5,463.6 L807.8,465.0 L808.7,466.6 L809.4,468.2 L810.0,470.0 L810.6,471.9 L810.9,474.0 L811.1,476.2 L811.0,478.5 L810.7,480.8 L810.0,483.3 L809.0,485.9 L807.8,488.6 L806.2,491.3 L804.4,494.2 L802.4,497.1 L800.0,500.0 L797.1,503.1 L793.7,506.3 L790.1,509.6 L786.4,512.9 L782.9,515.8 L780.0,518.3 L777.8,520.2 L776.2,521.5 L774.8,522.6 L773.4,523.7 L771.6,525.1 L769.2,527.0 L765.9,529.6 L762.1,532.8 L757.9,536.3 L753.5,539.7 L749.3,543.0 L745.5,545.9 L742.2,548.3 L739.2,550.4 L736.3,552.4 L733.4,554.2 L730.2,556.0 L726.6,557.7 L722.4,559.5 L717.7,561.2 L712.7,562.8 L707.7,564.4 L702.8,565.8 L698.2,567.1 L694.1,568.2 L690.2,569.2 L686.6,570.1 L682.8,570.8 L678.9,571.4 L674.6,571.9 L669.9,572.2 L664.8,572.5 L659.5,572.6 L654.1,572.5 L648.9,572.3 L643.8,571.9 L639.0,571.3 L634.4,570.5 L629.9,569.6 L625.4,568.5 L620.6,567.3 L615.5,566.0 L609.9,564.5 L603.7,562.8 L597.4,561.1 L591.2,559.2 L585.3,557.2 L580.0,555.3 L575.5,553.4 L571.5,551.5 L567.8,549.5 L564.3,547.5 L560.7,545.3 L556.9,543.0 L552.7,540.4 L548.3,537.7 L543.9,534.8 L539.6,531.9 L535.5,529.0 L531.8,526.3 L528.6,523.8 L525.7,521.4 L523.0,519.0 L520.6,516.7 L518.3,514.3 L516.0,511.8 L513.8,509.2 L511.7,506.4 L509.8,503.6 L507.9,500.8 L506.2,498.0 L504.6,495.2 L503.1,492.5 L501.8,489.8 L500.6,487.1 L499.5,484.4 L498.5,481.6 L497.5,478.7 L496.5,475.5 L495.6,471.8 L494.7,468.2 L493.9,464.7 L493.3,461.8 L492.8,459.7 M447.8,459.7 L447.6,461.6 L447.2,464.0 L446.7,467.0 L446.3,470.4 L445.8,474.3 L445.5,478.7 L445.2,483.6 L444.9,489.1 L444.6,495.1 L444.4,501.4 L444.3,507.8 L444.3,514.2 L444.4,520.7 L444.5,527.7 L444.8,534.7 L445.1,541.7 L445.5,548.3 L445.9,554.4 L446.5,560.0 L447.1,565.3 L447.7,570.3 L448.5,574.9 L449.3,579.1 L450.2,582.8 L451.2,586.1 L452.4,588.9 L453.6,591.4 L454.8,593.4 L456.1,594.9 L457.3,595.8 L458.5,596.2 L459.7,596.1 L460.9,595.5 L462.0,594.5 L463.2,593.0 L464.4,591.1 L465.6,588.7 L466.8,585.8 L468.0,582.5 L469.2,578.9 L470.4,575.0 L471.5,571.0 L472.6,566.8 L473.6,562.3 L474.6,557.6 L475.6,552.7 L476.5,547.7 L477.4,542.6 L478.3,537.4 L479.1,532.0 L479.9,526.4 L480.7,520.8 L481.4,515.2 L482.2,509.4 L482.9,503.4 L483.6,497.0 L484.2,490.5 L484.8,484.3 L485.3,478.6 L485.7,473.9 L485.9,470.2 L486.0,467.1 L485.9,464.6 L485.8,462.6 L485.7,461.0 L485.7,459.7 M450.2,459.7 L450.6,461.1 L451.0,463.0 L451.6,465.2 L452.3,467.5 L453.0,469.7 L453.8,471.6 L454.7,473.1 L455.8,474.5 L456.9,475.9 L458.0,477.0 L459.0,478.0 L459.7,478.7 M452.6,484.6 L453.1,485.0 L453.7,485.5 L454.5,486.1 L455.4,487.0 L456.3,488.4 L457.3,490.5 L458.3,493.3 L459.5,496.7 L460.7,500.6 L461.9,504.9 L463.2,509.5 L464.4,514.2 L465.6,519.1 L466.7,524.5 L467.8,530.1 L469.0,535.9 L470.2,541.7 L471.5,547.3 L472.9,552.9 L474.5,558.6 L476.1,564.3 L477.7,569.9 L479.4,575.3 L481.0,580.4 L482.6,585.4 L484.3,590.2 L486.1,594.9 L487.7,599.2 L489.2,603.1 L490.4,606.5 L491.4,609.5 L492.2,612.3 L492.9,614.7 L493.4,616.4 L493.7,617.3 L494.0,617.1 L494.1,615.7 L494.2,613.3 L494.1,610.0 L493.9,606.0 L493.5,601.6 L492.8,597.0 L491.8,591.9 L490.5,586.1 L489.0,579.8 L487.4,573.4 L485.8,567.2 L484.5,561.5 L483.4,556.4 L482.3,551.6 L481.3,547.0 L480.4,542.5 L479.5,537.9 L478.6,533.1 L477.7,528.3 L476.9,523.5 L476.2,518.6 L475.4,513.6 L474.6,508.2 L473.9,502.3 L473.0,495.4 L472.1,487.4 L471.2,479.1 L470.4,471.2 L469.7,464.5 L469.1,459.7 M466.8,459.7 L467.3,465.7 L468.0,474.1 L468.8,484.0 L469.7,494.5 L470.6,504.9 L471.5,514.2 L472.4,522.4 L473.3,530.2 L474.2,537.8 L475.1,545.5 L476.0,553.3 L476.7,561.5 L477.4,570.8 L478.0,581.1 L478.6,591.7 L479.1,601.6 L479.5,609.9 L479.8,615.9" fill="none" stroke="#45f29f" stroke-width="1" shape-rendering="crispEdges"/>
</svg>
<div id="dlg">
 <div id="title">
  <svg class="icon" viewBox="0 0 20 22"><rect x="0.7" y="2" width="3.2" height="13.7" fill="#68c0e2"/><rect x="17.8" y="4" width="1.6" height="17" fill="#2f6f8c"/><rect x="3" y="0.9" width="14.8" height="14" fill="#3ca6cf"/><rect x="2.4" y="14.9" width="16.6" height="5.9" fill="#3f7189"/><path d="M6.7 12V4H8.6L10.9 9L13.2 4H15.1V12H13.4V7L11.6 11H10.2L8.4 7V12Z" fill="#fff"/><path d="M7.2 19L8.2 17H9L9.6 19M10.2 19V17H11.4M12 19L13 17H13.6L14.2 19" stroke="#b9ccd6" stroke-width="0.6" fill="none"/></svg>
  <div class="t">Random Open Circles Generator</div>
  <svg style="position:absolute;left:0;top:0" width="431" height="37"><path d="M278 17.5 H290 M336.5 12.5 h11 v11 h-11 Z M395.2 12.2 L407.8 24.8 M407.8 12.2 L395.2 24.8" stroke="#000" stroke-width="1" fill="none"/></svg>
 </div>
 <div class="lbl" style="top:38.7px">Number of Circles:</div>
 <div class="inp" style="top:53px"><span>20</span></div>
 <div class="trk" style="top:59px"></div>
 <div class="hdl" style="left:150px;top:55px"></div>
 <div class="lbl" style="top:73.7px">Minimum Radius:</div>
 <div class="inp" style="top:88px"><span>250.0</span></div>
 <div class="trk" style="top:94px"></div>
 <div class="hdl" style="left:168px;top:90px"></div>
 <div class="lbl" style="top:108.7px">Maximum Radius:</div>
 <div class="inp" style="top:123px"><span>750.0</span></div>
 <div class="trk" style="top:129px"></div>
 <div class="hdl" style="left:334px;top:125px"></div>
 <div class="lbl" style="top:143.7px">Sections:</div>
 <div class="inp" style="top:158px"><span>8</span></div>
 <div class="trk" style="top:164px"></div>
 <div class="hdl" style="left:100px;top:160px"></div>
 <div class="lbl" style="top:195.7px">Random Seed:</div>
 <div class="inp" style="top:210px"><span>42</span></div>
 <div class="trk" style="top:216px"></div>
 <div class="hdl" style="left:87px;top:212px"></div>
 <div class="cb" style="top:180px"><svg width="13" height="13" style="position:absolute;left:0;top:0"><path transform="translate(0.6,0.4)" d="M1.5 5.8 L3 6.8 L4.2 7.9 L10.1 1.5 L10.7 1.8 L10.7 4.5 L4.2 10.6 L1.4 8.8 Z" fill="#e6e6e6"/></svg></div>
 <div class="cbt" style="top:182.0px">Open Circles</div>
 <div class="cb" style="top:232px"><svg width="13" height="13" style="position:absolute;left:0;top:0"><path transform="translate(0.6,0.4)" d="M1.5 5.8 L3 6.8 L4.2 7.9 L10.1 1.5 L10.7 1.8 L10.7 4.5 L4.2 10.6 L1.4 8.8 Z" fill="#e6e6e6"/></svg></div>
 <div class="cbt" style="top:233.0px">Delete Previous Circles</div>
 <div class="cb" style="top:249px"><svg width="13" height="13" style="position:absolute;left:0;top:0"><path transform="translate(0.6,0.4)" d="M1.5 5.8 L3 6.8 L4.2 7.9 L10.1 1.5 L10.7 1.8 L10.7 4.5 L4.2 10.6 L1.4 8.8 Z" fill="#e6e6e6"/></svg></div>
 <div class="cbt" style="top:249.9px">Live Update Mode</div>
 <div class="btn first" style="top:264px">Generate Circles</div>
 <div class="btn" style="top:288px">Reverse Curves</div>
 <div class="btn" style="top:312px;background:#6e6e6e">Attach Curves</div>
 <div class="btn" style="top:336px">Curl Curves</div>
 <div class="btn" style="top:360px">Smooth Curves</div>
 <div class="btn" style="top:384px">Open/Close Curves</div>
 <div class="btn" style="top:408px">Reset to Default</div>
</div>
</body></html>
